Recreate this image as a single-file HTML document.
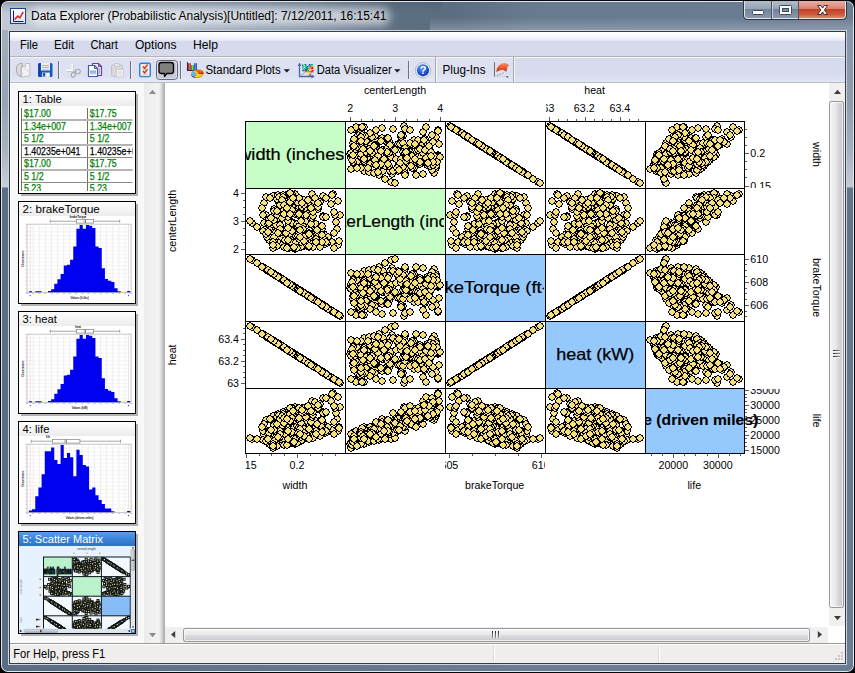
<!DOCTYPE html>
<html><head><meta charset="utf-8"><title>Data Explorer</title>
<style>
html,body{margin:0;padding:0;background:#000;overflow:hidden}
svg{display:block;font-family:"Liberation Sans",sans-serif}
text{white-space:pre}
</style></head><body>
<svg width="855" height="673" viewBox="0 0 855 673">
<defs>
<linearGradient id="g1" x1="0" y1="0" x2="1" y2="0"><stop offset="0" stop-color="#c2cad5"/><stop offset="0.2" stop-color="#b0bbc9"/><stop offset="0.34" stop-color="#8c9bae"/><stop offset="0.46" stop-color="#5d6f83"/><stop offset="0.53" stop-color="#5b6d81"/><stop offset="0.62" stop-color="#687a8f"/><stop offset="1" stop-color="#6b7d93"/></linearGradient>
<linearGradient id="g2" x1="0" y1="0" x2="0" y2="1"><stop offset="0" stop-color="#ffffff" stop-opacity="0.000"/><stop offset="0.55" stop-color="#ffffff" stop-opacity="0.000"/><stop offset="1" stop-color="#ffffff" stop-opacity="0.220"/></linearGradient>
<linearGradient id="g3" x1="0" y1="0" x2="0" y2="1"><stop offset="0" stop-color="#46566c" stop-opacity="0.400"/><stop offset="0.35" stop-color="#46566c" stop-opacity="0.188"/><stop offset="1" stop-color="#46566c" stop-opacity="0.000"/></linearGradient>
<clipPath id="wc0"><rect x="2" y="2" width="851" height="669" rx="6"/></clipPath>
<linearGradient id="g4" x1="0" y1="0" x2="0" y2="1"><stop offset="0" stop-color="#a4b0be"/><stop offset="0.11" stop-color="#96a3b3"/><stop offset="0.19" stop-color="#a8b3c1"/><stop offset="0.2476" stop-color="#c8d0d9"/><stop offset="0.2492" stop-color="#5c6e84"/><stop offset="1" stop-color="#5a6c82"/></linearGradient>
<clipPath id="wc"><rect x="2" y="2" width="851" height="669" rx="6"/></clipPath>
<linearGradient id="g5" x1="0" y1="0" x2="1" y2="0"><stop offset="0" stop-color="#5a6c82"/><stop offset="0.25" stop-color="#62748a"/><stop offset="0.6" stop-color="#6b7d93"/><stop offset="1" stop-color="#6b7d93"/></linearGradient>
<linearGradient id="g6" x1="0" y1="0" x2="0" y2="1"><stop offset="0" stop-color="#8797aa"/><stop offset="0.11" stop-color="#8e9bab"/><stop offset="0.19" stop-color="#a5b0be"/><stop offset="0.2476" stop-color="#c3cbd5"/><stop offset="0.2492" stop-color="#63758b"/><stop offset="1" stop-color="#6b7d93"/></linearGradient>
<filter id="blur" x="-20%" y="-100%" width="140%" height="300%"><feGaussianBlur stdDeviation="4"/></filter>
<linearGradient id="g7" x1="0" y1="0" x2="0" y2="1"><stop offset="0" stop-color="#ffffff"/><stop offset="1" stop-color="#d8e4f5"/></linearGradient>
<linearGradient id="g8" x1="0" y1="0" x2="0" y2="1"><stop offset="0" stop-color="#b3bdc9"/><stop offset="0.45" stop-color="#97a4b4"/><stop offset="0.46" stop-color="#70819a"/><stop offset="1" stop-color="#8a99ac"/></linearGradient>
<linearGradient id="g9" x1="0" y1="0" x2="0" y2="1"><stop offset="0" stop-color="#e9b0a4"/><stop offset="0.45" stop-color="#d9836f"/><stop offset="0.46" stop-color="#c23c22"/><stop offset="0.8" stop-color="#cf5a3e"/><stop offset="1" stop-color="#e08a6c"/></linearGradient>
<linearGradient id="g10" x1="0" y1="0" x2="0" y2="1"><stop offset="0" stop-color="#ffffff"/><stop offset="0.5" stop-color="#f7f8fc"/><stop offset="1" stop-color="#e3e7f3"/></linearGradient>
<linearGradient id="g11" x1="0" y1="0" x2="0" y2="1"><stop offset="0" stop-color="#d7dbee"/><stop offset="0.7" stop-color="#d8dcee"/><stop offset="1" stop-color="#e2e5f3"/></linearGradient>
<linearGradient id="g12" x1="0" y1="0" x2="0" y2="1"><stop offset="0" stop-color="#dde1f1"/><stop offset="0.7" stop-color="#dce0f0"/><stop offset="1" stop-color="#e6e9f5"/></linearGradient>
<linearGradient id="g13" x1="0" y1="0" x2="0" y2="1"><stop offset="0" stop-color="#8fa5d6"/><stop offset="1" stop-color="#c4d0ec"/></linearGradient>
<linearGradient id="g14" x1="0" y1="0" x2="1" y2="0"><stop offset="0" stop-color="#a01010"/><stop offset="0.5" stop-color="#ff5a48"/><stop offset="1" stop-color="#a01010"/></linearGradient>
<linearGradient id="g15" x1="0" y1="0" x2="1" y2="0"><stop offset="0" stop-color="#0c7a10"/><stop offset="0.5" stop-color="#58f050"/><stop offset="1" stop-color="#0c7a10"/></linearGradient>
<linearGradient id="g16" x1="0" y1="0" x2="1" y2="0"><stop offset="0" stop-color="#0c2a98"/><stop offset="0.5" stop-color="#4a90f0"/><stop offset="1" stop-color="#0c2a98"/></linearGradient>
<radialGradient id="hg" cx="0.4" cy="0.3" r="0.8"><stop offset="0" stop-color="#5f9cf5"/><stop offset="0.6" stop-color="#1c54d0"/><stop offset="1" stop-color="#0c2f9a"/></radialGradient>
<linearGradient id="g17" x1="0" y1="0" x2="0" y2="1"><stop offset="0" stop-color="#f49070"/><stop offset="0.5" stop-color="#e85a30"/><stop offset="1" stop-color="#cc3408"/></linearGradient>
<linearGradient id="g18" x1="0" y1="0" x2="1" y2="0"><stop offset="0" stop-color="#ebebeb"/><stop offset="0.5" stop-color="#f0f0f0"/><stop offset="1" stop-color="#f3f3f3"/></linearGradient>
<linearGradient id="g19" x1="0" y1="0" x2="1" y2="0"><stop offset="0" stop-color="#f2f2f2"/><stop offset="0.3" stop-color="#e0e0e0"/><stop offset="0.75" stop-color="#bdbdbd"/><stop offset="1" stop-color="#a6a6a6"/></linearGradient>
<linearGradient id="g20" x1="0" y1="0" x2="1" y2="0"><stop offset="0" stop-color="#f6f6f6"/><stop offset="0.45" stop-color="#e9e9eb"/><stop offset="0.55" stop-color="#dcdce0"/><stop offset="1" stop-color="#c4c4ca"/></linearGradient>
<linearGradient id="g21" x1="0" y1="0" x2="1" y2="0"><stop offset="0" stop-color="#2a2a2a"/><stop offset="1" stop-color="#9a9a9a"/></linearGradient>
<linearGradient id="g22" x1="0" y1="0" x2="0" y2="1"><stop offset="0" stop-color="#f6f6f6"/><stop offset="0.45" stop-color="#e9e9eb"/><stop offset="0.55" stop-color="#dcdce0"/><stop offset="1" stop-color="#c4c4ca"/></linearGradient>
<linearGradient id="g23" x1="0" y1="0" x2="0" y2="1"><stop offset="0" stop-color="#2a2a2a"/><stop offset="1" stop-color="#9a9a9a"/></linearGradient>
<linearGradient id="g24" x1="0" y1="0" x2="0" y2="1"><stop offset="0" stop-color="#ffffff"/><stop offset="1" stop-color="#ebebeb"/></linearGradient>
<linearGradient id="g25" x1="0" y1="0" x2="0" y2="1"><stop offset="0" stop-color="#5a9ee8"/><stop offset="0.5" stop-color="#3c84d8"/><stop offset="1" stop-color="#2f72c4"/></linearGradient>
<clipPath id="c1"><rect x="19" y="106" width="113.5" height="85"/></clipPath>
<marker id="m" markerWidth="8" markerHeight="8" refX="4" refY="4" markerUnits="userSpaceOnUse" overflow="visible"><path d="M3 0h2v1h2v2h1v2h-1v2h-2v1h-2v-1h-2v-2h-1v-2h1v-2h2z" fill="#000"/><path d="M3 1h2v1h1v1h1v2h-1v1h-1v1h-2v-1h-1v-1h-1v-2h1v-1h1z" fill="#f5de7c"/></marker>
<clipPath id="d0"><rect x="246" y="121" width="98" height="67"/></clipPath>
<clipPath id="d1"><rect x="346" y="188" width="98" height="66"/></clipPath>
<clipPath id="d2"><rect x="446" y="254" width="98" height="67"/></clipPath>
<clipPath id="d3"><rect x="546" y="321" width="98" height="67"/></clipPath>
<clipPath id="d4"><rect x="646" y="388" width="400" height="65"/></clipPath>
<clipPath id="t2"><rect x="346" y="83" width="99" height="38"/></clipPath>
<clipPath id="t4"><rect x="546" y="83" width="99" height="38"/></clipPath>
<clipPath id="b1"><rect x="246" y="454" width="99" height="30"/></clipPath>
<clipPath id="b3"><rect x="445" y="454" width="100" height="30"/></clipPath>
<clipPath id="b5"><rect x="646" y="454" width="110" height="30"/></clipPath>
<clipPath id="r1"><rect x="745" y="122" width="90" height="66"/></clipPath>
<clipPath id="r3"><rect x="745" y="255" width="90" height="66"/></clipPath>
<clipPath id="r5"><rect x="745" y="389" width="90" height="75"/></clipPath>
<clipPath id="c5"><rect x="19" y="546" width="112" height="82.5"/></clipPath>
<marker id="mm" markerWidth="3" markerHeight="3" refX="1.5" refY="1.5" markerUnits="userSpaceOnUse" overflow="visible"><rect x="0" y="0" width="3" height="3" fill="#0c141c"/><rect x="0.9" y="0.9" width="1.2" height="1.2" fill="#f5de7c"/></marker>
<linearGradient id="g26" x1="0" y1="0" x2="1" y2="0"><stop offset="0" stop-color="#f0f0f0"/><stop offset="1" stop-color="#a8a8b0"/></linearGradient>
<linearGradient id="g27" x1="0" y1="0" x2="0" y2="1"><stop offset="0" stop-color="#e8ecf2"/><stop offset="1" stop-color="#98a4b4"/></linearGradient>
</defs>
<rect x="0" y="0" width="855" height="673" rx="8" fill="#05070a"/>
<rect x="1" y="1" width="853" height="671" rx="7" fill="#e3e8ee"/>
<rect x="2" y="2" width="851" height="669" rx="6" fill="#6b7d93"/>
<rect x="2" y="2" width="851" height="40" rx="6" fill="url(#g1)"/>
<rect x="430" y="2" width="423" height="28" fill="url(#g2)"/>
<rect x="2" y="2" width="440" height="12" fill="url(#g3)" clip-path="url(#wc0)"/>
<g clip-path="url(#wc)">
<rect x="2" y="30" width="7" height="634" fill="url(#g4)" />
<rect x="2" y="664" width="851" height="7" fill="url(#g5)" />
<rect x="847" y="30" width="6" height="634" fill="url(#g6)" />
</g>
<rect x="8" y="30" width="839" height="635" fill="#cdd4dd" />
<rect x="9" y="31" width="837" height="633" fill="#333c48" />
<rect x="10" y="32" width="835" height="631" fill="#ffffff" />
<rect x="30" y="8" width="360" height="17" rx="8" fill="#ffffff" opacity="0.6" filter="url(#blur)"/>
<rect x="10" y="8" width="16" height="16" fill="#1b3fa0" />
<rect x="11" y="9" width="14" height="14" fill="url(#g7)" />
<path d="M13.5 10.5V21.5H23.5" stroke="#1a1a50" stroke-width="1" fill="none"/>
<path d="M14.8 19.4l3-3.2 2.1 1.700 3.300-6" stroke="#d03020" stroke-width="1.6" fill="none"/>
<text x="31.00" y="20.00" font-size="12" textLength="355.50" lengthAdjust="spacingAndGlyphs" fill="#000" >Data Explorer (Probabilistic Analysis)[Untitled]: 7/12/2011, 16:15:41</text>
<path d="M743 1H847V15Q847 20 842 20H748Q743 20 743 15Z" fill="#2e3744"/>
<path d="M744 1H846V15Q846 19 842 19H748Q744 19 744 15Z" fill="#dfe5ec"/>
<path d="M745 1H771V18H748Q745 18 745 15Z" fill="url(#g8)"/>
<rect x="771" y="1" width="1" height="18" fill="#4a5665" />
<rect x="772" y="1" width="1" height="18" fill="#c5ccd6" />
<rect x="773" y="1" width="25" height="17" fill="url(#g8)" />
<rect x="798" y="1" width="1" height="18" fill="#4a5665" />
<path d="M799 1H845V15Q845 18 842 18H799Z" fill="url(#g9)"/>
<rect x="752.5" y="10.5" width="11" height="4" rx="1" fill="#fff" stroke="#3f4a58" stroke-width="1"/>
<rect x="779.5" y="5.5" width="12" height="9" rx="1" fill="#fff" stroke="#3f4a58" stroke-width="1"/>
<rect x="782.5" y="8.5" width="6" height="3" fill="#7e8ea2" stroke="#3f4a58" stroke-width="1"/>
<path d="M817.5 5.5h3.4l1.7 2.6 1.7-2.6h3.4l-3.3 4.5 3.3 4.5h-3.4l-1.7-2.6-1.7 2.6h-3.4l3.3-4.5z" fill="#fff" stroke="#4a2a28" stroke-width="1" stroke-linejoin="round"/>
<rect x="10" y="32" width="835" height="9" fill="url(#g10)" />
<rect x="10" y="41" width="835" height="15" fill="#d6daec" />
<rect x="10" y="56" width="835" height="1" fill="#b4b2b4" />
<rect x="10" y="57" width="835" height="1" fill="#f4f5fa" />
<rect x="10" y="58" width="835" height="24" fill="url(#g11)" />
<rect x="10" y="82" width="835" height="1" fill="#b9bcc8" />
<text x="20.00" y="49.00" font-size="12.5" textLength="18.00" lengthAdjust="spacingAndGlyphs" fill="#000" >File</text>
<text x="54.00" y="49.00" font-size="12.5" textLength="20.00" lengthAdjust="spacingAndGlyphs" fill="#000" >Edit</text>
<text x="90.50" y="49.00" font-size="12.5" textLength="27.50" lengthAdjust="spacingAndGlyphs" fill="#000" >Chart</text>
<text x="135.00" y="49.00" font-size="12.5" textLength="41.50" lengthAdjust="spacingAndGlyphs" fill="#000" >Options</text>
<text x="193.00" y="49.00" font-size="12.5" textLength="25.00" lengthAdjust="spacingAndGlyphs" fill="#000" >Help</text>
<rect x="10" y="58" width="425" height="24" fill="url(#g12)" />
<rect x="435" y="57" width="1" height="25" fill="#a8a8ae" />
<rect x="436" y="57" width="1" height="25" fill="#f6f7fb" />
<rect x="437" y="58" width="76" height="24" fill="url(#g12)" />
<rect x="513" y="57" width="1" height="25" fill="#a8a8ae" />
<rect x="514" y="57" width="1" height="25" fill="#f0f2f9" />
<path d="M21 66.5h4.5v-3h4.3v12.2l-9 1.6z" fill="#f3f3f4" stroke="#bcbcc2" stroke-width="0.9" stroke-linejoin="round"/>
<path d="M16.6 66.2l3.2-2.8h2.4v3.4h-1v10l-3.2-1.6-1.4-4z" fill="#dcdcdf" stroke="#a2a2a8" stroke-width="0.9" stroke-linejoin="round"/>
<path d="M18 68.5q1.5 2.5 3 1.5M23.5 69h3q1.5 0.5 1.2 3M21.5 72.5l3 2.5" fill="none" stroke="#d0d0d6" stroke-width="0.8"/>
<rect x="38" y="63" width="14.5" height="14" rx="1.5" fill="#1958c4"/>
<rect x="38.5" y="63.5" width="2" height="13" fill="#0c3fa8"/>
<rect x="41" y="63" width="9" height="7.5" fill="#f4f1ea" />
<rect x="42" y="65" width="7" height="1" fill="#b0b0b0" />
<rect x="42" y="67" width="7" height="1" fill="#b0b0b0" />
<rect x="42" y="69" width="7" height="0.8" fill="#c8c8c8" />
<rect x="42" y="72.5" width="8" height="4.5" fill="#c9ccd4" />
<rect x="43" y="73" width="2" height="3.5" fill="#1958c4" />
<rect x="46.5" y="73" width="2.5" height="3.5" fill="#ffffff" />
<rect x="58" y="61" width="1" height="18" fill="#6f6f80" />
<rect x="59" y="61" width="1" height="18" fill="#eceef7" />
<rect x="71.4" y="64.3" width="2.2" height="7" fill="#f7f7f8" />
<rect x="73.3" y="64.8" width="0.8" height="6.4" fill="#c2c2c8" />
<rect x="66" y="69.3" width="6.6" height="2.1" fill="#f7f7f8" />
<rect x="66.2" y="71.2" width="6.4" height="0.8" fill="#c2c2c8" />
<ellipse cx="73.3" cy="74.8" rx="1.9" ry="2.4" fill="#e4e6f0" stroke="#a4a4ac" stroke-width="1.1" transform="rotate(12 73.3 74.8)"/>
<ellipse cx="77.9" cy="71.5" rx="2.4" ry="2.1" fill="#e4e6f0" stroke="#a4a4ac" stroke-width="1.1" transform="rotate(-20 77.9 71.5)"/>
<path d="M73 71.2l1.2 1.2M74.2 71.5l1.6-0.4" stroke="#b0b0b8" stroke-width="1" fill="none"/>
<path d="M92.5 63.5h6l3 3v9h-9z" fill="#efeaf7" stroke="#6b3fa3" stroke-width="1.2" stroke-linejoin="round"/>
<path d="M98.5 63.5v3h3" fill="none" stroke="#6b3fa3" stroke-width="1"/>
<rect x="98.5" y="68" width="1.5" height="6" fill="#b9a4d8" />
<path d="M88.5 65.5h6l3 3v8h-9z" fill="#ffffff" stroke="#3f5ea6" stroke-width="1.2" stroke-linejoin="round"/>
<path d="M94.5 65.5v3h3" fill="none" stroke="#3f5ea6" stroke-width="1"/>
<rect x="90" y="70.5" width="6" height="4" fill="url(#g13)" />
<rect x="111.5" y="65" width="11" height="11.5" rx="1" fill="#d9d9dd" stroke="#c2c2c8" stroke-width="1"/>
<rect x="114.5" y="63.5" width="5" height="3" rx="1" fill="#e6e6ea" stroke="#bcbcc4" stroke-width="0.8"/>
<rect x="116.5" y="69.5" width="7" height="7.5" fill="#f6f6f8" stroke="#c6c6cc" stroke-width="0.8"/>
<path d="M117.5 72h5M117.5 74h5M119 70.5v6M121 70.5v6" stroke="#d6d6dc" stroke-width="0.7" fill="none"/>
<rect x="130" y="61" width="1" height="18" fill="#6f6f80" />
<rect x="131" y="61" width="1" height="18" fill="#eceef7" />
<rect x="139.7" y="63.2" width="10.6" height="13.4" rx="1.5" fill="#f3ede2" stroke="#2b7fe3" stroke-width="1.4"/>
<path d="M143 66.5l1.6 2 3-4M143 71l1.6 2 3-4" fill="none" stroke="#d02a1c" stroke-width="1.3"/>
<path d="M142.5 69.5h5M142.5 74.3h5" stroke="#b9b4aa" stroke-width="0.8"/>
<rect x="156.5" y="60.5" width="21" height="19" rx="3" fill="#c6cad8" stroke="#676a78" stroke-width="1"/>
<rect x="157.5" y="61.5" width="19" height="17" rx="2.2" fill="none" stroke="#d9dce8" stroke-width="1"/>
<path d="M161.5 62.5h9.5q2.5 0 2.5 2.5v6q0 2.5-2.5 2.5h-4.2l-2.3 3v-3h-3q-2.5 0-2.5-2.5v-6q0-2.5 2.5-2.5z" fill="#808080" stroke="#000" stroke-width="1.3" stroke-linejoin="round"/>
<rect x="180" y="61" width="1" height="18" fill="#6f6f80" />
<rect x="181" y="61" width="1" height="18" fill="#eceef7" />
<path d="M187.5 62.2v8.3h9.6" fill="none" stroke="#1c2474" stroke-width="1.1"/>
<rect x="188.1" y="63.2" width="2.7" height="6.9" fill="url(#g14)" />
<rect x="191.1" y="65.1" width="2.7" height="5" fill="url(#g15)" />
<rect x="194.2" y="63.2" width="2.7" height="6.9" fill="url(#g16)" />
<ellipse cx="197" cy="74.4" rx="5.8" ry="3.7" fill="#c88a10"/>
<ellipse cx="197" cy="73.6" rx="5.8" ry="3.7" fill="#f8d010"/>
<path d="M197 73.6L195.2 77.1A5.8 3.7 0 0 1 193 70.9z" fill="#68b0ee"/>
<path d="M191.2 73.6A5.8 3.7 0 0 0 195.2 77.1L195.2 77.9A5.8 3.7 0 0 1 191.2 74.4z" fill="#2c5a98"/>
<path d="M198 72.6L194.6 70.2A5.8 3.6 0 0 1 203.8 72.6z" fill="#ff5a10"/>
<path d="M198 72.6H203.8A5.8 3.6 0 0 1 203.2 74.2L198 73.4z" fill="#c01808"/>
<text x="205.40" y="74.00" font-size="12.5" textLength="75.40" lengthAdjust="spacingAndGlyphs" fill="#000" >Standard Plots</text>
<path d="M283.6 69.2h6.4l-3.2 3.4z" fill="#1a1a1a"/>
<path d="M299.5 64v12.5h13.5" fill="none" stroke="#4a68b0" stroke-width="1.3"/>
<path d="M297.6 66l1.9-3.6 1.9 3.6zM311.4 74.6l3.4 1.9-3.4 1.9z" fill="#4a68b0"/>
<path d="M300.5 75.5l5-3.5" stroke="#9aa8cc" stroke-width="1"/>
<rect x="304" y="68" width="1.3" height="1.3" fill="#20c040" />
<rect x="311" y="67" width="1.3" height="1.3" fill="#f0e020" />
<rect x="308" y="71" width="1.3" height="1.3" fill="#20c040" />
<rect x="305" y="65" width="1.3" height="1.3" fill="#1060d0" />
<rect x="307" y="68" width="1.3" height="1.3" fill="#1060d0" />
<rect x="308" y="65" width="1.3" height="1.3" fill="#20b0e0" />
<rect x="311" y="68" width="1.3" height="1.3" fill="#f0e020" />
<rect x="309" y="64" width="1.3" height="1.3" fill="#30d060" />
<rect x="302" y="70" width="1.3" height="1.3" fill="#20c040" />
<rect x="307" y="69" width="1.3" height="1.3" fill="#20c040" />
<rect x="309" y="71" width="1.3" height="1.3" fill="#20c040" />
<rect x="309" y="68" width="1.3" height="1.3" fill="#e02020" />
<rect x="311" y="64" width="1.3" height="1.3" fill="#20b0e0" />
<rect x="307" y="66" width="1.3" height="1.3" fill="#1060d0" />
<rect x="310" y="70" width="1.3" height="1.3" fill="#20c040" />
<rect x="307" y="67" width="1.3" height="1.3" fill="#20c040" />
<rect x="307" y="67" width="1.3" height="1.3" fill="#20b0e0" />
<rect x="311" y="69" width="1.3" height="1.3" fill="#f0e020" />
<rect x="311" y="71" width="1.3" height="1.3" fill="#e02020" />
<rect x="309" y="66" width="1.3" height="1.3" fill="#30d060" />
<rect x="311" y="68" width="1.3" height="1.3" fill="#e02020" />
<rect x="308" y="71" width="1.3" height="1.3" fill="#f08020" />
<rect x="305" y="64" width="1.3" height="1.3" fill="#1060d0" />
<rect x="303" y="70" width="1.3" height="1.3" fill="#1060d0" />
<rect x="311" y="64" width="1.3" height="1.3" fill="#1060d0" />
<rect x="310" y="70" width="1.3" height="1.3" fill="#f0e020" />
<rect x="308" y="70" width="1.3" height="1.3" fill="#20c040" />
<rect x="309" y="66" width="1.3" height="1.3" fill="#20c040" />
<rect x="307" y="71" width="1.3" height="1.3" fill="#f08020" />
<rect x="302" y="64" width="1.3" height="1.3" fill="#30d060" />
<rect x="302" y="65" width="1.3" height="1.3" fill="#1060d0" />
<rect x="305" y="66" width="1.3" height="1.3" fill="#2030e0" />
<rect x="312" y="66" width="1.3" height="1.3" fill="#f08020" />
<rect x="312" y="71" width="1.3" height="1.3" fill="#20c040" />
<rect x="306" y="70" width="1.3" height="1.3" fill="#20c040" />
<rect x="308" y="68" width="1.3" height="1.3" fill="#f0e020" />
<rect x="308" y="71" width="1.3" height="1.3" fill="#f08020" />
<rect x="306" y="69" width="1.3" height="1.3" fill="#e02020" />
<rect x="311" y="67" width="1.3" height="1.3" fill="#f08020" />
<rect x="307" y="68" width="1.3" height="1.3" fill="#2030e0" />
<rect x="310" y="71" width="1.3" height="1.3" fill="#f08020" />
<rect x="302" y="68" width="1.3" height="1.3" fill="#20b0e0" />
<rect x="303" y="69" width="1.3" height="1.3" fill="#1060d0" />
<rect x="306" y="71" width="1.3" height="1.3" fill="#f08020" />
<rect x="309" y="64" width="1.3" height="1.3" fill="#2030e0" />
<rect x="312" y="64" width="1.3" height="1.3" fill="#20c040" />
<rect x="305" y="67" width="1.3" height="1.3" fill="#30d060" />
<rect x="308" y="65" width="1.3" height="1.3" fill="#20b0e0" />
<rect x="305" y="66" width="1.3" height="1.3" fill="#30d060" />
<rect x="305" y="70" width="1.3" height="1.3" fill="#2030e0" />
<rect x="310" y="64" width="1.3" height="1.3" fill="#30d060" />
<rect x="309" y="65" width="1.3" height="1.3" fill="#30d060" />
<rect x="304" y="70" width="1.3" height="1.3" fill="#20b0e0" />
<rect x="305" y="69" width="1.3" height="1.3" fill="#2030e0" />
<rect x="303" y="66" width="1.3" height="1.3" fill="#20c040" />
<rect x="309" y="65" width="1.3" height="1.3" fill="#20b0e0" />
<rect x="303" y="69" width="1.3" height="1.3" fill="#20b0e0" />
<rect x="311" y="67" width="1.3" height="1.3" fill="#e02020" />
<rect x="310" y="64" width="1.3" height="1.3" fill="#20b0e0" />
<rect x="305" y="70" width="1.3" height="1.3" fill="#e02020" />
<rect x="311" y="66" width="1.3" height="1.3" fill="#f0e020" />
<rect x="310" y="66" width="1.3" height="1.3" fill="#e02020" />
<rect x="306" y="68" width="1.3" height="1.3" fill="#20c040" />
<rect x="307" y="69" width="1.3" height="1.3" fill="#20c040" />
<rect x="306" y="67" width="1.3" height="1.3" fill="#1060d0" />
<rect x="304" y="64" width="1.3" height="1.3" fill="#30d060" />
<rect x="312" y="67" width="1.3" height="1.3" fill="#e02020" />
<rect x="302" y="67" width="1.3" height="1.3" fill="#30d060" />
<rect x="312" y="68" width="1.3" height="1.3" fill="#e02020" />
<rect x="311" y="70" width="1.3" height="1.3" fill="#f08020" />
<rect x="308" y="72" width="1.4" height="1.4" fill="#f0e020" />
<rect x="309.5" y="73.5" width="1.4" height="1.4" fill="#e02020" />
<rect x="311" y="71" width="1.4" height="1.4" fill="#e02020" />
<rect x="307" y="74" width="1.4" height="1.4" fill="#f0e020" />
<rect x="310" y="69.5" width="1.4" height="1.4" fill="#f0e020" />
<rect x="312" y="70" width="1.4" height="1.4" fill="#e02020" />
<rect x="309" y="75" width="1.4" height="1.4" fill="#e02020" />
<text x="316.70" y="74.00" font-size="12.5" textLength="75.00" lengthAdjust="spacingAndGlyphs" fill="#000" >Data Visualizer</text>
<path d="M394.1 69.2h6.4l-3.2 3.4z" fill="#1a1a1a"/>
<rect x="408" y="61" width="1" height="18" fill="#6f6f80" />
<rect x="409" y="61" width="1" height="18" fill="#eceef7" />
<circle cx="423" cy="70.3" r="7.6" fill="#f4f6fb" stroke="#9aa6c4" stroke-width="0.8"/>
<circle cx="423" cy="70.3" r="6.1" fill="url(#hg)"/>
<text x="423.00" y="74.30" font-size="11" text-anchor="middle" font-weight="bold" fill="#ffffff" >?</text>
<text x="442.50" y="74.00" font-size="12.5" textLength="43.00" lengthAdjust="spacingAndGlyphs" fill="#000" >Plug-Ins</text>
<path d="M494.4 62.3v14.3h13" fill="none" stroke="#d2d4dc" stroke-width="1"/>
<rect x="494" y="62.3" width="1" height="14.3" fill="#6e6e74" />
<path d="M496.2 71.8q0.3-4.5 2.8-6.6 2.6-2.4 6-2.2 2.6 0.4 4 2.6l-1.600 1.2-0.800 4.800q-1.400-0.300-2.300-1.200-2.300-1.200-4.600 0.200-1.600 1.100-3.500 1.200z" fill="url(#g17)"/>
<path d="M497 75.6l7-2.800" stroke="#8a8a90" stroke-width="0.9" stroke-dasharray="1.6 1.2"/>
<rect x="506.6" y="76" width="1.6" height="1.6" fill="#55555c" />
<rect x="10" y="83" width="134" height="560" fill="#f8f8f8" />
<rect x="10" y="83" width="134" height="1" fill="#ffffff" />
<rect x="10" y="83" width="1" height="560" fill="#ffffff" />
<rect x="144" y="83" width="15" height="560" fill="url(#g18)" />
<rect x="159" y="83" width="6" height="560" fill="url(#g19)" />
<path d="M149 94l3.5-4.2 3.5 4.2z" fill="#8a8a8a"/>
<path d="M149 633l3.5 4.2 3.5-4.2z" fill="#8a8a8a"/>
<rect x="165" y="83" width="664" height="544" fill="#ffffff" />
<rect x="829" y="83" width="16" height="543" fill="#f0f0f0" />
<path d="M834 94l3.5-4.2 3.5 4.2z" fill="#3c3c3c"/>
<path d="M834 616l3.5 4.2 3.5-4.2z" fill="#3c3c3c"/>
<rect x="829.5" y="101.5" width="14" height="506" rx="1.8" fill="url(#g20)" stroke="#979797" stroke-width="1"/>
<rect x="830.5" y="102.5" width="12" height="504" rx="1.5" fill="none" stroke="#ffffff" stroke-opacity="0.7" stroke-width="1"/>
<rect x="833" y="350" width="7" height="1" fill="url(#g21)" />
<rect x="833" y="351" width="7" height="1" fill="#f4f4f4" />
<rect x="833" y="353" width="7" height="1" fill="url(#g21)" />
<rect x="833" y="354" width="7" height="1" fill="#f4f4f4" />
<rect x="833" y="356" width="7" height="1" fill="url(#g21)" />
<rect x="833" y="357" width="7" height="1" fill="#f4f4f4" />
<rect x="165" y="627" width="663" height="16" fill="#f0f0f0" />
<rect x="828" y="627" width="17" height="16" fill="#ffffff" />
<path d="M175.2 631l-4.2 3.5 4.2 3.5z" fill="#3c3c3c"/>
<path d="M817.8 631l4.2 3.5-4.2 3.5z" fill="#3c3c3c"/>
<rect x="183.5" y="628.5" width="626" height="13" rx="1.8" fill="url(#g22)" stroke="#979797" stroke-width="1"/>
<rect x="184.5" y="629.5" width="624" height="11" rx="1.5" fill="none" stroke="#ffffff" stroke-opacity="0.7" stroke-width="1"/>
<rect x="492" y="631" width="1" height="7" fill="url(#g23)" />
<rect x="493" y="631" width="1" height="7" fill="#f4f4f4" />
<rect x="495" y="631" width="1" height="7" fill="url(#g23)" />
<rect x="496" y="631" width="1" height="7" fill="#f4f4f4" />
<rect x="498" y="631" width="1" height="7" fill="url(#g23)" />
<rect x="499" y="631" width="1" height="7" fill="#f4f4f4" />
<rect x="10" y="643" width="835" height="1" fill="#9a9a9a" />
<rect x="10" y="644" width="835" height="19" fill="#f0eded" />
<rect x="10" y="644" width="835" height="1" fill="#ffffff" />
<rect x="493" y="646" width="1" height="16" fill="#dcd9d9" />
<rect x="494" y="646" width="1" height="16" fill="#ffffff" />
<rect x="658" y="646" width="1" height="16" fill="#dcd9d9" />
<rect x="659" y="646" width="1" height="16" fill="#ffffff" />
<text x="13.30" y="658.00" font-size="12.5" textLength="92.00" lengthAdjust="spacingAndGlyphs" fill="#000" >For Help, press F1</text>
<rect x="841" y="658" width="2" height="2" fill="#b8b4b4" />
<rect x="841.5" y="658.5" width="1" height="1" fill="#ffffff" />
<rect x="838" y="658" width="2" height="2" fill="#b8b4b4" />
<rect x="838.5" y="658.5" width="1" height="1" fill="#ffffff" />
<rect x="835" y="658" width="2" height="2" fill="#b8b4b4" />
<rect x="835.5" y="658.5" width="1" height="1" fill="#ffffff" />
<rect x="841" y="655" width="2" height="2" fill="#b8b4b4" />
<rect x="841.5" y="655.5" width="1" height="1" fill="#ffffff" />
<rect x="838" y="655" width="2" height="2" fill="#b8b4b4" />
<rect x="838.5" y="655.5" width="1" height="1" fill="#ffffff" />
<rect x="841" y="652" width="2" height="2" fill="#b8b4b4" />
<rect x="841.5" y="652.5" width="1" height="1" fill="#ffffff" />
<rect x="136" y="94" width="2" height="102" fill="#b2b2b2" />
<rect x="21" y="194" width="117" height="2" fill="#b2b2b2" />
<rect x="18" y="91" width="118" height="103" fill="#000000" />
<rect x="19" y="92" width="116" height="101" fill="#ffffff" />
<rect x="19" y="92" width="116" height="14" fill="url(#g24)" />
<text x="22.60" y="103.20" font-size="11.4" textLength="39.30" lengthAdjust="spacingAndGlyphs" fill="#000000" >1: Table</text>
<g clip-path="url(#c1)">
<rect x="21" y="108" width="1" height="84" fill="#707070" />
<rect x="87" y="108" width="1" height="84" fill="#707070" />
<rect x="22" y="119" width="111" height="2" fill="#b4b4b4" />
<rect x="22" y="144" width="111" height="2" fill="#b4b4b4" />
<rect x="22" y="169" width="111" height="2" fill="#b4b4b4" />
<rect x="22" y="132" width="111" height="1" fill="#8c8c8c" />
<rect x="22" y="157" width="111" height="1" fill="#8c8c8c" />
<rect x="22" y="182" width="111" height="1" fill="#8c8c8c" />
<text x="24.00" y="117.30" font-size="11" textLength="26.91" lengthAdjust="spacingAndGlyphs" fill="#008000" stroke="#008000" stroke-width="0.25">$17.00</text>
<text x="89.80" y="117.30" font-size="11" textLength="26.91" lengthAdjust="spacingAndGlyphs" fill="#008000" stroke="#008000" stroke-width="0.25">$17.75</text>
<text x="24.00" y="129.80" font-size="11" textLength="41.84" lengthAdjust="spacingAndGlyphs" fill="#008000" stroke="#008000" stroke-width="0.25">1.34e+007</text>
<text x="89.80" y="129.80" font-size="11" textLength="41.84" lengthAdjust="spacingAndGlyphs" fill="#008000" stroke="#008000" stroke-width="0.25">1.34e+007</text>
<text x="24.00" y="142.30" font-size="11" textLength="19.57" lengthAdjust="spacingAndGlyphs" fill="#008000" stroke="#008000" stroke-width="0.25">5 1/2</text>
<text x="89.80" y="142.30" font-size="11" textLength="19.57" lengthAdjust="spacingAndGlyphs" fill="#008000" stroke="#008000" stroke-width="0.25">5 1/2</text>
<text x="24.00" y="154.80" font-size="11" textLength="56.52" lengthAdjust="spacingAndGlyphs" fill="#000000" stroke="#000000" stroke-width="0.25">1.40235e+041</text>
<text x="89.80" y="154.80" font-size="11" textLength="56.52" lengthAdjust="spacingAndGlyphs" fill="#000000" stroke="#000000" stroke-width="0.25">1.40235e+041</text>
<text x="24.00" y="167.30" font-size="11" textLength="26.91" lengthAdjust="spacingAndGlyphs" fill="#008000" stroke="#008000" stroke-width="0.25">$17.00</text>
<text x="89.80" y="167.30" font-size="11" textLength="26.91" lengthAdjust="spacingAndGlyphs" fill="#008000" stroke="#008000" stroke-width="0.25">$17.75</text>
<text x="24.00" y="179.80" font-size="11" textLength="19.57" lengthAdjust="spacingAndGlyphs" fill="#008000" stroke="#008000" stroke-width="0.25">5 1/2</text>
<text x="89.80" y="179.80" font-size="11" textLength="19.57" lengthAdjust="spacingAndGlyphs" fill="#008000" stroke="#008000" stroke-width="0.25">5 1/2</text>
<text x="24.00" y="192.30" font-size="11" textLength="17.13" lengthAdjust="spacingAndGlyphs" fill="#008000" stroke="#008000" stroke-width="0.25">5.23</text>
<text x="89.80" y="192.30" font-size="11" textLength="17.13" lengthAdjust="spacingAndGlyphs" fill="#008000" stroke="#008000" stroke-width="0.25">5.23</text>
</g>
<rect x="136" y="204" width="2" height="102" fill="#b2b2b2" />
<rect x="21" y="304" width="117" height="2" fill="#b2b2b2" />
<rect x="18" y="201" width="118" height="103" fill="#000000" />
<rect x="19" y="202" width="116" height="101" fill="#ffffff" />
<rect x="19" y="202" width="116" height="14" fill="url(#g24)" />
<text x="22.60" y="213.20" font-size="11.4" textLength="77.20" lengthAdjust="spacingAndGlyphs" fill="#000000" >2: brakeTorque</text>
<rect x="27.05" y="224.18" width="104.06" height="68.17" fill="#ffffff" stroke="#b8b8b8" stroke-width="0.8"/>
<line x1="33.1693" y1="224.337" x2="33.1693" y2="292.356" stroke="#e4e4e4" stroke-width="0.6" />
<line x1="39.2903" y1="224.337" x2="39.2903" y2="292.356" stroke="#e4e4e4" stroke-width="0.6" />
<line x1="45.4112" y1="224.337" x2="45.4112" y2="292.356" stroke="#e4e4e4" stroke-width="0.6" />
<line x1="51.5322" y1="224.337" x2="51.5322" y2="292.356" stroke="#e4e4e4" stroke-width="0.6" />
<line x1="57.6531" y1="224.337" x2="57.6531" y2="292.356" stroke="#e4e4e4" stroke-width="0.6" />
<line x1="63.7741" y1="224.337" x2="63.7741" y2="292.356" stroke="#e4e4e4" stroke-width="0.6" />
<line x1="69.895" y1="224.337" x2="69.895" y2="292.356" stroke="#e4e4e4" stroke-width="0.6" />
<line x1="76.016" y1="224.337" x2="76.016" y2="292.356" stroke="#e4e4e4" stroke-width="0.6" />
<line x1="82.1369" y1="224.337" x2="82.1369" y2="292.356" stroke="#e4e4e4" stroke-width="0.6" />
<line x1="88.2579" y1="224.337" x2="88.2579" y2="292.356" stroke="#e4e4e4" stroke-width="0.6" />
<line x1="94.3788" y1="224.337" x2="94.3788" y2="292.356" stroke="#e4e4e4" stroke-width="0.6" />
<line x1="100.5" y1="224.337" x2="100.5" y2="292.356" stroke="#e4e4e4" stroke-width="0.6" />
<line x1="106.621" y1="224.337" x2="106.621" y2="292.356" stroke="#e4e4e4" stroke-width="0.6" />
<line x1="112.742" y1="224.337" x2="112.742" y2="292.356" stroke="#e4e4e4" stroke-width="0.6" />
<line x1="118.863" y1="224.337" x2="118.863" y2="292.356" stroke="#e4e4e4" stroke-width="0.6" />
<line x1="124.984" y1="224.337" x2="124.984" y2="292.356" stroke="#e4e4e4" stroke-width="0.6" />
<line x1="27.0484" y1="227.968" x2="131.105" y2="227.968" stroke="#ececec" stroke-width="0.6" />
<line x1="27.0484" y1="231.756" x2="131.105" y2="231.756" stroke="#ececec" stroke-width="0.6" />
<line x1="27.0484" y1="235.543" x2="131.105" y2="235.543" stroke="#ececec" stroke-width="0.6" />
<line x1="27.0484" y1="239.331" x2="131.105" y2="239.331" stroke="#ececec" stroke-width="0.6" />
<line x1="27.0484" y1="243.118" x2="131.105" y2="243.118" stroke="#ececec" stroke-width="0.6" />
<line x1="27.0484" y1="246.906" x2="131.105" y2="246.906" stroke="#ececec" stroke-width="0.6" />
<line x1="27.0484" y1="250.693" x2="131.105" y2="250.693" stroke="#ececec" stroke-width="0.6" />
<line x1="27.0484" y1="254.481" x2="131.105" y2="254.481" stroke="#ececec" stroke-width="0.6" />
<line x1="27.0484" y1="258.268" x2="131.105" y2="258.268" stroke="#ececec" stroke-width="0.6" />
<line x1="27.0484" y1="262.056" x2="131.105" y2="262.056" stroke="#ececec" stroke-width="0.6" />
<line x1="27.0484" y1="265.843" x2="131.105" y2="265.843" stroke="#ececec" stroke-width="0.6" />
<line x1="27.0484" y1="269.631" x2="131.105" y2="269.631" stroke="#ececec" stroke-width="0.6" />
<line x1="27.0484" y1="273.418" x2="131.105" y2="273.418" stroke="#ececec" stroke-width="0.6" />
<line x1="27.0484" y1="277.206" x2="131.105" y2="277.206" stroke="#ececec" stroke-width="0.6" />
<line x1="27.0484" y1="280.993" x2="131.105" y2="280.993" stroke="#ececec" stroke-width="0.6" />
<line x1="27.0484" y1="284.781" x2="131.105" y2="284.781" stroke="#ececec" stroke-width="0.6" />
<line x1="27.0484" y1="288.568" x2="131.105" y2="288.568" stroke="#ececec" stroke-width="0.6" />
<line x1="30.1685" y1="224.337" x2="30.1685" y2="292.356" stroke="#e8a0a0" stroke-width="0.6" stroke-dasharray="1 1"/>
<line x1="128.452" y1="224.337" x2="128.452" y2="292.356" stroke="#e8a0a0" stroke-width="0.6" stroke-dasharray="1 1"/>
<line x1="25.4883" y1="224.181" x2="26.8924" y2="224.181" stroke="#9a9a9a" stroke-width="0.5" />
<line x1="25.4883" y1="227.968" x2="26.8924" y2="227.968" stroke="#9a9a9a" stroke-width="0.5" />
<line x1="25.4883" y1="231.756" x2="26.8924" y2="231.756" stroke="#9a9a9a" stroke-width="0.5" />
<line x1="25.4883" y1="235.543" x2="26.8924" y2="235.543" stroke="#9a9a9a" stroke-width="0.5" />
<line x1="25.4883" y1="239.331" x2="26.8924" y2="239.331" stroke="#9a9a9a" stroke-width="0.5" />
<line x1="25.4883" y1="243.118" x2="26.8924" y2="243.118" stroke="#9a9a9a" stroke-width="0.5" />
<line x1="25.4883" y1="246.906" x2="26.8924" y2="246.906" stroke="#9a9a9a" stroke-width="0.5" />
<line x1="25.4883" y1="250.693" x2="26.8924" y2="250.693" stroke="#9a9a9a" stroke-width="0.5" />
<line x1="25.4883" y1="254.481" x2="26.8924" y2="254.481" stroke="#9a9a9a" stroke-width="0.5" />
<line x1="25.4883" y1="258.268" x2="26.8924" y2="258.268" stroke="#9a9a9a" stroke-width="0.5" />
<line x1="25.4883" y1="262.056" x2="26.8924" y2="262.056" stroke="#9a9a9a" stroke-width="0.5" />
<line x1="25.4883" y1="265.843" x2="26.8924" y2="265.843" stroke="#9a9a9a" stroke-width="0.5" />
<line x1="25.4883" y1="269.631" x2="26.8924" y2="269.631" stroke="#9a9a9a" stroke-width="0.5" />
<line x1="25.4883" y1="273.418" x2="26.8924" y2="273.418" stroke="#9a9a9a" stroke-width="0.5" />
<line x1="25.4883" y1="277.206" x2="26.8924" y2="277.206" stroke="#9a9a9a" stroke-width="0.5" />
<line x1="25.4883" y1="280.993" x2="26.8924" y2="280.993" stroke="#9a9a9a" stroke-width="0.5" />
<line x1="25.4883" y1="284.781" x2="26.8924" y2="284.781" stroke="#9a9a9a" stroke-width="0.5" />
<line x1="25.4883" y1="288.568" x2="26.8924" y2="288.568" stroke="#9a9a9a" stroke-width="0.5" />
<line x1="25.4883" y1="292.356" x2="26.8924" y2="292.356" stroke="#9a9a9a" stroke-width="0.5" />
<path d="M28.92 292.36V291.26H32.09V292.36zM35.25 292.36V291.26H38.42V292.36zM38.42 292.36V291.26H41.59V292.36zM47.92 292.36V290.95H51.09V292.36zM51.09 292.36V289.24H54.26V292.36zM54.26 292.36V283.78H57.42V292.36zM57.42 292.36V279.25H60.59V292.36zM60.59 292.36V274.10H63.76V292.36zM63.76 292.36V265.52H66.92V292.36zM66.92 292.36V264.74H70.09V292.36zM70.09 292.36V259.75H73.26V292.36zM73.26 292.36V246.49H76.42V292.36zM76.42 292.36V228.86H79.59V292.36zM79.59 292.36V224.96H82.76V292.36zM82.76 292.36V228.86H85.93V292.36zM85.93 292.36V224.96H89.09V292.36zM89.09 292.36V225.74H92.26V292.36zM92.26 292.36V228.08H95.43V292.36zM95.43 292.36V246.49H98.59V292.36zM98.59 292.36V247.89H101.76V292.36zM101.76 292.36V268.17H104.93V292.36zM104.93 292.36V279.10H108.09V292.36zM108.09 292.36V280.81H111.26V292.36zM111.26 292.36V281.90H114.43V292.36zM114.43 292.36V288.14H117.59V292.36zM117.59 292.36V291.26H120.76V292.36zM127.10 292.36V291.11H130.26V292.36z" fill="#0000f0"/>
<line x1="50.2933" y1="221.217" x2="119.716" y2="221.217" stroke="#808080" stroke-width="0.7" />
<line x1="50.2933" y1="219.657" x2="50.2933" y2="222.777" stroke="#808080" stroke-width="0.7" />
<line x1="119.716" y1="219.657" x2="119.716" y2="222.777" stroke="#808080" stroke-width="0.7" />
<rect x="76.50" y="219.34" width="17.16" height="3.74" fill="#ffffff" stroke="#808080" stroke-width="0.7"/>
<line x1="85.5507" y1="219.345" x2="85.5507" y2="223.089" stroke="#606060" stroke-width="0.7" />
<circle cx="84.61" cy="221.22" r="0.9" fill="none" stroke="#606060" stroke-width="0.4"/>
<text x="78.06" y="217.78" font-size="2.8" text-anchor="middle" font-weight="bold" fill="#101010" >brakeTorque</text>
<text x="79.62" y="299.06" font-size="2.8" text-anchor="middle" font-weight="bold" fill="#101010" >Values (ft-lbs)</text>
<text transform="translate(24.24 258.50) rotate(-90)" font-size="2.6" font-weight="bold" text-anchor="middle" fill="#202020">Occurrences</text>
<rect x="26.0484" y="293.292" width="2.2" height="0.7" fill="#b0b0b0" />
<rect x="32.1693" y="293.292" width="2.2" height="0.7" fill="#b0b0b0" />
<rect x="38.2903" y="293.292" width="2.2" height="0.7" fill="#b0b0b0" />
<rect x="44.4112" y="293.292" width="2.2" height="0.7" fill="#b0b0b0" />
<rect x="50.5322" y="293.292" width="2.2" height="0.7" fill="#b0b0b0" />
<rect x="56.6531" y="293.292" width="2.2" height="0.7" fill="#b0b0b0" />
<rect x="62.7741" y="293.292" width="2.2" height="0.7" fill="#b0b0b0" />
<rect x="68.895" y="293.292" width="2.2" height="0.7" fill="#b0b0b0" />
<rect x="75.016" y="293.292" width="2.2" height="0.7" fill="#b0b0b0" />
<rect x="81.1369" y="293.292" width="2.2" height="0.7" fill="#b0b0b0" />
<rect x="87.2579" y="293.292" width="2.2" height="0.7" fill="#b0b0b0" />
<rect x="93.3788" y="293.292" width="2.2" height="0.7" fill="#b0b0b0" />
<rect x="99.4998" y="293.292" width="2.2" height="0.7" fill="#b0b0b0" />
<rect x="105.621" y="293.292" width="2.2" height="0.7" fill="#b0b0b0" />
<rect x="111.742" y="293.292" width="2.2" height="0.7" fill="#b0b0b0" />
<rect x="117.863" y="293.292" width="2.2" height="0.7" fill="#b0b0b0" />
<rect x="123.984" y="293.292" width="2.2" height="0.7" fill="#b0b0b0" />
<rect x="130.105" y="293.292" width="2.2" height="0.7" fill="#b0b0b0" />
<rect x="29.6685" y="295.164" width="1" height="1" fill="#202020" />
<rect x="127.952" y="295.164" width="1" height="1" fill="#202020" />
<rect x="136" y="314" width="2" height="102" fill="#b2b2b2" />
<rect x="21" y="414" width="117" height="2" fill="#b2b2b2" />
<rect x="18" y="311" width="118" height="103" fill="#000000" />
<rect x="19" y="312" width="116" height="101" fill="#ffffff" />
<rect x="19" y="312" width="116" height="14" fill="url(#g24)" />
<text x="22.60" y="323.20" font-size="11.4" textLength="34.30" lengthAdjust="spacingAndGlyphs" fill="#000000" >3: heat</text>
<rect x="27.05" y="334.18" width="104.06" height="68.17" fill="#ffffff" stroke="#b8b8b8" stroke-width="0.8"/>
<line x1="33.1693" y1="334.337" x2="33.1693" y2="402.356" stroke="#e4e4e4" stroke-width="0.6" />
<line x1="39.2903" y1="334.337" x2="39.2903" y2="402.356" stroke="#e4e4e4" stroke-width="0.6" />
<line x1="45.4112" y1="334.337" x2="45.4112" y2="402.356" stroke="#e4e4e4" stroke-width="0.6" />
<line x1="51.5322" y1="334.337" x2="51.5322" y2="402.356" stroke="#e4e4e4" stroke-width="0.6" />
<line x1="57.6531" y1="334.337" x2="57.6531" y2="402.356" stroke="#e4e4e4" stroke-width="0.6" />
<line x1="63.7741" y1="334.337" x2="63.7741" y2="402.356" stroke="#e4e4e4" stroke-width="0.6" />
<line x1="69.895" y1="334.337" x2="69.895" y2="402.356" stroke="#e4e4e4" stroke-width="0.6" />
<line x1="76.016" y1="334.337" x2="76.016" y2="402.356" stroke="#e4e4e4" stroke-width="0.6" />
<line x1="82.1369" y1="334.337" x2="82.1369" y2="402.356" stroke="#e4e4e4" stroke-width="0.6" />
<line x1="88.2579" y1="334.337" x2="88.2579" y2="402.356" stroke="#e4e4e4" stroke-width="0.6" />
<line x1="94.3788" y1="334.337" x2="94.3788" y2="402.356" stroke="#e4e4e4" stroke-width="0.6" />
<line x1="100.5" y1="334.337" x2="100.5" y2="402.356" stroke="#e4e4e4" stroke-width="0.6" />
<line x1="106.621" y1="334.337" x2="106.621" y2="402.356" stroke="#e4e4e4" stroke-width="0.6" />
<line x1="112.742" y1="334.337" x2="112.742" y2="402.356" stroke="#e4e4e4" stroke-width="0.6" />
<line x1="118.863" y1="334.337" x2="118.863" y2="402.356" stroke="#e4e4e4" stroke-width="0.6" />
<line x1="124.984" y1="334.337" x2="124.984" y2="402.356" stroke="#e4e4e4" stroke-width="0.6" />
<line x1="27.0484" y1="337.968" x2="131.105" y2="337.968" stroke="#ececec" stroke-width="0.6" />
<line x1="27.0484" y1="341.756" x2="131.105" y2="341.756" stroke="#ececec" stroke-width="0.6" />
<line x1="27.0484" y1="345.543" x2="131.105" y2="345.543" stroke="#ececec" stroke-width="0.6" />
<line x1="27.0484" y1="349.331" x2="131.105" y2="349.331" stroke="#ececec" stroke-width="0.6" />
<line x1="27.0484" y1="353.118" x2="131.105" y2="353.118" stroke="#ececec" stroke-width="0.6" />
<line x1="27.0484" y1="356.906" x2="131.105" y2="356.906" stroke="#ececec" stroke-width="0.6" />
<line x1="27.0484" y1="360.693" x2="131.105" y2="360.693" stroke="#ececec" stroke-width="0.6" />
<line x1="27.0484" y1="364.481" x2="131.105" y2="364.481" stroke="#ececec" stroke-width="0.6" />
<line x1="27.0484" y1="368.268" x2="131.105" y2="368.268" stroke="#ececec" stroke-width="0.6" />
<line x1="27.0484" y1="372.056" x2="131.105" y2="372.056" stroke="#ececec" stroke-width="0.6" />
<line x1="27.0484" y1="375.843" x2="131.105" y2="375.843" stroke="#ececec" stroke-width="0.6" />
<line x1="27.0484" y1="379.631" x2="131.105" y2="379.631" stroke="#ececec" stroke-width="0.6" />
<line x1="27.0484" y1="383.418" x2="131.105" y2="383.418" stroke="#ececec" stroke-width="0.6" />
<line x1="27.0484" y1="387.206" x2="131.105" y2="387.206" stroke="#ececec" stroke-width="0.6" />
<line x1="27.0484" y1="390.993" x2="131.105" y2="390.993" stroke="#ececec" stroke-width="0.6" />
<line x1="27.0484" y1="394.781" x2="131.105" y2="394.781" stroke="#ececec" stroke-width="0.6" />
<line x1="27.0484" y1="398.568" x2="131.105" y2="398.568" stroke="#ececec" stroke-width="0.6" />
<line x1="30.1685" y1="334.337" x2="30.1685" y2="402.356" stroke="#e8a0a0" stroke-width="0.6" stroke-dasharray="1 1"/>
<line x1="128.452" y1="334.337" x2="128.452" y2="402.356" stroke="#e8a0a0" stroke-width="0.6" stroke-dasharray="1 1"/>
<line x1="25.4883" y1="334.181" x2="26.8924" y2="334.181" stroke="#9a9a9a" stroke-width="0.5" />
<line x1="25.4883" y1="337.968" x2="26.8924" y2="337.968" stroke="#9a9a9a" stroke-width="0.5" />
<line x1="25.4883" y1="341.756" x2="26.8924" y2="341.756" stroke="#9a9a9a" stroke-width="0.5" />
<line x1="25.4883" y1="345.543" x2="26.8924" y2="345.543" stroke="#9a9a9a" stroke-width="0.5" />
<line x1="25.4883" y1="349.331" x2="26.8924" y2="349.331" stroke="#9a9a9a" stroke-width="0.5" />
<line x1="25.4883" y1="353.118" x2="26.8924" y2="353.118" stroke="#9a9a9a" stroke-width="0.5" />
<line x1="25.4883" y1="356.906" x2="26.8924" y2="356.906" stroke="#9a9a9a" stroke-width="0.5" />
<line x1="25.4883" y1="360.693" x2="26.8924" y2="360.693" stroke="#9a9a9a" stroke-width="0.5" />
<line x1="25.4883" y1="364.481" x2="26.8924" y2="364.481" stroke="#9a9a9a" stroke-width="0.5" />
<line x1="25.4883" y1="368.268" x2="26.8924" y2="368.268" stroke="#9a9a9a" stroke-width="0.5" />
<line x1="25.4883" y1="372.056" x2="26.8924" y2="372.056" stroke="#9a9a9a" stroke-width="0.5" />
<line x1="25.4883" y1="375.843" x2="26.8924" y2="375.843" stroke="#9a9a9a" stroke-width="0.5" />
<line x1="25.4883" y1="379.631" x2="26.8924" y2="379.631" stroke="#9a9a9a" stroke-width="0.5" />
<line x1="25.4883" y1="383.418" x2="26.8924" y2="383.418" stroke="#9a9a9a" stroke-width="0.5" />
<line x1="25.4883" y1="387.206" x2="26.8924" y2="387.206" stroke="#9a9a9a" stroke-width="0.5" />
<line x1="25.4883" y1="390.993" x2="26.8924" y2="390.993" stroke="#9a9a9a" stroke-width="0.5" />
<line x1="25.4883" y1="394.781" x2="26.8924" y2="394.781" stroke="#9a9a9a" stroke-width="0.5" />
<line x1="25.4883" y1="398.568" x2="26.8924" y2="398.568" stroke="#9a9a9a" stroke-width="0.5" />
<line x1="25.4883" y1="402.356" x2="26.8924" y2="402.356" stroke="#9a9a9a" stroke-width="0.5" />
<path d="M28.92 402.36V401.26H32.09V402.36zM35.25 402.36V401.26H38.42V402.36zM38.42 402.36V401.26H41.59V402.36zM47.92 402.36V400.95H51.09V402.36zM51.09 402.36V399.24H54.26V402.36zM54.26 402.36V393.78H57.42V402.36zM57.42 402.36V389.25H60.59V402.36zM60.59 402.36V384.10H63.76V402.36zM63.76 402.36V375.52H66.92V402.36zM66.92 402.36V374.74H70.09V402.36zM70.09 402.36V369.75H73.26V402.36zM73.26 402.36V356.49H76.42V402.36zM76.42 402.36V338.86H79.59V402.36zM79.59 402.36V334.96H82.76V402.36zM82.76 402.36V338.86H85.93V402.36zM85.93 402.36V334.96H89.09V402.36zM89.09 402.36V335.74H92.26V402.36zM92.26 402.36V338.08H95.43V402.36zM95.43 402.36V356.49H98.59V402.36zM98.59 402.36V357.89H101.76V402.36zM101.76 402.36V378.17H104.93V402.36zM104.93 402.36V389.10H108.09V402.36zM108.09 402.36V390.81H111.26V402.36zM111.26 402.36V391.90H114.43V402.36zM114.43 402.36V398.14H117.59V402.36zM117.59 402.36V401.26H120.76V402.36zM127.10 402.36V401.11H130.26V402.36z" fill="#0000f0"/>
<line x1="50.2933" y1="331.217" x2="119.716" y2="331.217" stroke="#808080" stroke-width="0.7" />
<line x1="50.2933" y1="329.657" x2="50.2933" y2="332.777" stroke="#808080" stroke-width="0.7" />
<line x1="119.716" y1="329.657" x2="119.716" y2="332.777" stroke="#808080" stroke-width="0.7" />
<rect x="76.50" y="329.34" width="17.16" height="3.74" fill="#ffffff" stroke="#808080" stroke-width="0.7"/>
<line x1="85.5507" y1="329.345" x2="85.5507" y2="333.089" stroke="#606060" stroke-width="0.7" />
<circle cx="84.61" cy="331.22" r="0.9" fill="none" stroke="#606060" stroke-width="0.4"/>
<text x="78.06" y="327.78" font-size="2.8" text-anchor="middle" font-weight="bold" fill="#101010" >heat</text>
<text x="79.62" y="409.06" font-size="2.8" text-anchor="middle" font-weight="bold" fill="#101010" >Values (kW)</text>
<text transform="translate(24.24 368.50) rotate(-90)" font-size="2.6" font-weight="bold" text-anchor="middle" fill="#202020">Occurrences</text>
<rect x="26.0484" y="403.292" width="2.2" height="0.7" fill="#b0b0b0" />
<rect x="32.1693" y="403.292" width="2.2" height="0.7" fill="#b0b0b0" />
<rect x="38.2903" y="403.292" width="2.2" height="0.7" fill="#b0b0b0" />
<rect x="44.4112" y="403.292" width="2.2" height="0.7" fill="#b0b0b0" />
<rect x="50.5322" y="403.292" width="2.2" height="0.7" fill="#b0b0b0" />
<rect x="56.6531" y="403.292" width="2.2" height="0.7" fill="#b0b0b0" />
<rect x="62.7741" y="403.292" width="2.2" height="0.7" fill="#b0b0b0" />
<rect x="68.895" y="403.292" width="2.2" height="0.7" fill="#b0b0b0" />
<rect x="75.016" y="403.292" width="2.2" height="0.7" fill="#b0b0b0" />
<rect x="81.1369" y="403.292" width="2.2" height="0.7" fill="#b0b0b0" />
<rect x="87.2579" y="403.292" width="2.2" height="0.7" fill="#b0b0b0" />
<rect x="93.3788" y="403.292" width="2.2" height="0.7" fill="#b0b0b0" />
<rect x="99.4998" y="403.292" width="2.2" height="0.7" fill="#b0b0b0" />
<rect x="105.621" y="403.292" width="2.2" height="0.7" fill="#b0b0b0" />
<rect x="111.742" y="403.292" width="2.2" height="0.7" fill="#b0b0b0" />
<rect x="117.863" y="403.292" width="2.2" height="0.7" fill="#b0b0b0" />
<rect x="123.984" y="403.292" width="2.2" height="0.7" fill="#b0b0b0" />
<rect x="130.105" y="403.292" width="2.2" height="0.7" fill="#b0b0b0" />
<rect x="29.6685" y="405.164" width="1" height="1" fill="#202020" />
<rect x="127.952" y="405.164" width="1" height="1" fill="#202020" />
<rect x="136" y="424" width="2" height="102" fill="#b2b2b2" />
<rect x="21" y="524" width="117" height="2" fill="#b2b2b2" />
<rect x="18" y="421" width="118" height="103" fill="#000000" />
<rect x="19" y="422" width="116" height="101" fill="#ffffff" />
<rect x="19" y="422" width="116" height="14" fill="url(#g24)" />
<text x="22.60" y="433.20" font-size="11.4" textLength="26.80" lengthAdjust="spacingAndGlyphs" fill="#000000" >4: life</text>
<rect x="27.05" y="444.18" width="104.06" height="68.17" fill="#ffffff" stroke="#b8b8b8" stroke-width="0.8"/>
<line x1="33.1693" y1="444.337" x2="33.1693" y2="512.356" stroke="#e4e4e4" stroke-width="0.6" />
<line x1="39.2903" y1="444.337" x2="39.2903" y2="512.356" stroke="#e4e4e4" stroke-width="0.6" />
<line x1="45.4112" y1="444.337" x2="45.4112" y2="512.356" stroke="#e4e4e4" stroke-width="0.6" />
<line x1="51.5322" y1="444.337" x2="51.5322" y2="512.356" stroke="#e4e4e4" stroke-width="0.6" />
<line x1="57.6531" y1="444.337" x2="57.6531" y2="512.356" stroke="#e4e4e4" stroke-width="0.6" />
<line x1="63.7741" y1="444.337" x2="63.7741" y2="512.356" stroke="#e4e4e4" stroke-width="0.6" />
<line x1="69.895" y1="444.337" x2="69.895" y2="512.356" stroke="#e4e4e4" stroke-width="0.6" />
<line x1="76.016" y1="444.337" x2="76.016" y2="512.356" stroke="#e4e4e4" stroke-width="0.6" />
<line x1="82.1369" y1="444.337" x2="82.1369" y2="512.356" stroke="#e4e4e4" stroke-width="0.6" />
<line x1="88.2579" y1="444.337" x2="88.2579" y2="512.356" stroke="#e4e4e4" stroke-width="0.6" />
<line x1="94.3788" y1="444.337" x2="94.3788" y2="512.356" stroke="#e4e4e4" stroke-width="0.6" />
<line x1="100.5" y1="444.337" x2="100.5" y2="512.356" stroke="#e4e4e4" stroke-width="0.6" />
<line x1="106.621" y1="444.337" x2="106.621" y2="512.356" stroke="#e4e4e4" stroke-width="0.6" />
<line x1="112.742" y1="444.337" x2="112.742" y2="512.356" stroke="#e4e4e4" stroke-width="0.6" />
<line x1="118.863" y1="444.337" x2="118.863" y2="512.356" stroke="#e4e4e4" stroke-width="0.6" />
<line x1="124.984" y1="444.337" x2="124.984" y2="512.356" stroke="#e4e4e4" stroke-width="0.6" />
<line x1="27.0484" y1="447.968" x2="131.105" y2="447.968" stroke="#ececec" stroke-width="0.6" />
<line x1="27.0484" y1="451.756" x2="131.105" y2="451.756" stroke="#ececec" stroke-width="0.6" />
<line x1="27.0484" y1="455.543" x2="131.105" y2="455.543" stroke="#ececec" stroke-width="0.6" />
<line x1="27.0484" y1="459.331" x2="131.105" y2="459.331" stroke="#ececec" stroke-width="0.6" />
<line x1="27.0484" y1="463.118" x2="131.105" y2="463.118" stroke="#ececec" stroke-width="0.6" />
<line x1="27.0484" y1="466.906" x2="131.105" y2="466.906" stroke="#ececec" stroke-width="0.6" />
<line x1="27.0484" y1="470.693" x2="131.105" y2="470.693" stroke="#ececec" stroke-width="0.6" />
<line x1="27.0484" y1="474.481" x2="131.105" y2="474.481" stroke="#ececec" stroke-width="0.6" />
<line x1="27.0484" y1="478.268" x2="131.105" y2="478.268" stroke="#ececec" stroke-width="0.6" />
<line x1="27.0484" y1="482.056" x2="131.105" y2="482.056" stroke="#ececec" stroke-width="0.6" />
<line x1="27.0484" y1="485.843" x2="131.105" y2="485.843" stroke="#ececec" stroke-width="0.6" />
<line x1="27.0484" y1="489.631" x2="131.105" y2="489.631" stroke="#ececec" stroke-width="0.6" />
<line x1="27.0484" y1="493.418" x2="131.105" y2="493.418" stroke="#ececec" stroke-width="0.6" />
<line x1="27.0484" y1="497.206" x2="131.105" y2="497.206" stroke="#ececec" stroke-width="0.6" />
<line x1="27.0484" y1="500.993" x2="131.105" y2="500.993" stroke="#ececec" stroke-width="0.6" />
<line x1="27.0484" y1="504.781" x2="131.105" y2="504.781" stroke="#ececec" stroke-width="0.6" />
<line x1="27.0484" y1="508.568" x2="131.105" y2="508.568" stroke="#ececec" stroke-width="0.6" />
<line x1="30.1685" y1="444.337" x2="30.1685" y2="512.356" stroke="#e8a0a0" stroke-width="0.6" stroke-dasharray="1 1"/>
<line x1="128.452" y1="444.337" x2="128.452" y2="512.356" stroke="#e8a0a0" stroke-width="0.6" stroke-dasharray="1 1"/>
<line x1="25.4883" y1="444.181" x2="26.8924" y2="444.181" stroke="#9a9a9a" stroke-width="0.5" />
<line x1="25.4883" y1="447.968" x2="26.8924" y2="447.968" stroke="#9a9a9a" stroke-width="0.5" />
<line x1="25.4883" y1="451.756" x2="26.8924" y2="451.756" stroke="#9a9a9a" stroke-width="0.5" />
<line x1="25.4883" y1="455.543" x2="26.8924" y2="455.543" stroke="#9a9a9a" stroke-width="0.5" />
<line x1="25.4883" y1="459.331" x2="26.8924" y2="459.331" stroke="#9a9a9a" stroke-width="0.5" />
<line x1="25.4883" y1="463.118" x2="26.8924" y2="463.118" stroke="#9a9a9a" stroke-width="0.5" />
<line x1="25.4883" y1="466.906" x2="26.8924" y2="466.906" stroke="#9a9a9a" stroke-width="0.5" />
<line x1="25.4883" y1="470.693" x2="26.8924" y2="470.693" stroke="#9a9a9a" stroke-width="0.5" />
<line x1="25.4883" y1="474.481" x2="26.8924" y2="474.481" stroke="#9a9a9a" stroke-width="0.5" />
<line x1="25.4883" y1="478.268" x2="26.8924" y2="478.268" stroke="#9a9a9a" stroke-width="0.5" />
<line x1="25.4883" y1="482.056" x2="26.8924" y2="482.056" stroke="#9a9a9a" stroke-width="0.5" />
<line x1="25.4883" y1="485.843" x2="26.8924" y2="485.843" stroke="#9a9a9a" stroke-width="0.5" />
<line x1="25.4883" y1="489.631" x2="26.8924" y2="489.631" stroke="#9a9a9a" stroke-width="0.5" />
<line x1="25.4883" y1="493.418" x2="26.8924" y2="493.418" stroke="#9a9a9a" stroke-width="0.5" />
<line x1="25.4883" y1="497.206" x2="26.8924" y2="497.206" stroke="#9a9a9a" stroke-width="0.5" />
<line x1="25.4883" y1="500.993" x2="26.8924" y2="500.993" stroke="#9a9a9a" stroke-width="0.5" />
<line x1="25.4883" y1="504.781" x2="26.8924" y2="504.781" stroke="#9a9a9a" stroke-width="0.5" />
<line x1="25.4883" y1="508.568" x2="26.8924" y2="508.568" stroke="#9a9a9a" stroke-width="0.5" />
<line x1="25.4883" y1="512.356" x2="26.8924" y2="512.356" stroke="#9a9a9a" stroke-width="0.5" />
<path d="M28.92 512.36V510.48H32.09V512.36zM32.09 512.36V509.24H35.25V512.36zM35.25 512.36V496.13H38.42V512.36zM38.42 512.36V487.39H41.59V512.36zM41.59 512.36V474.13H44.76V512.36zM44.76 512.36V451.20H47.92V512.36zM47.92 512.36V451.20H51.09V512.36zM51.09 512.36V447.61H54.26V512.36zM54.26 512.36V460.09H57.42V512.36zM57.42 512.36V463.99H60.59V512.36zM60.59 512.36V444.96H63.76V512.36zM63.76 512.36V457.91H66.92V512.36zM66.92 512.36V453.07H70.09V512.36zM70.09 512.36V457.13H73.26V512.36zM73.26 512.36V476.16H76.42V512.36zM76.42 512.36V449.64H79.59V512.36zM79.59 512.36V455.10H82.76V512.36zM82.76 512.36V464.93H85.93V512.36zM85.93 512.36V466.49H89.09V512.36zM89.09 512.36V489.42H92.26V512.36zM92.26 512.36V487.39H95.43V512.36zM95.43 512.36V495.20H98.59V512.36zM98.59 512.36V500.03H101.76V512.36zM101.76 512.36V503.93H104.93V512.36zM104.93 512.36V508.46H108.09V512.36zM108.09 512.36V508.46H111.26V512.36zM111.26 512.36V511.26H114.43V512.36zM127.10 512.36V510.95H130.26V512.36z" fill="#0000f0"/>
<line x1="31.2605" y1="441.217" x2="120.496" y2="441.217" stroke="#808080" stroke-width="0.7" />
<line x1="31.2605" y1="439.657" x2="31.2605" y2="442.777" stroke="#808080" stroke-width="0.7" />
<line x1="120.496" y1="439.657" x2="120.496" y2="442.777" stroke="#808080" stroke-width="0.7" />
<rect x="52.32" y="439.34" width="27.61" height="3.74" fill="#ffffff" stroke="#808080" stroke-width="0.7"/>
<line x1="66.3619" y1="439.345" x2="66.3619" y2="443.089" stroke="#606060" stroke-width="0.7" />
<circle cx="65.43" cy="441.22" r="0.9" fill="none" stroke="#606060" stroke-width="0.4"/>
<text x="48.11" y="437.78" font-size="2.8" text-anchor="middle" font-weight="bold" fill="#101010" >life</text>
<text x="79.62" y="519.06" font-size="2.8" text-anchor="middle" font-weight="bold" fill="#101010" >Values (driven miles)</text>
<text transform="translate(24.24 478.50) rotate(-90)" font-size="2.6" font-weight="bold" text-anchor="middle" fill="#202020">Occurrences</text>
<rect x="26.0484" y="513.292" width="2.2" height="0.7" fill="#b0b0b0" />
<rect x="32.1693" y="513.292" width="2.2" height="0.7" fill="#b0b0b0" />
<rect x="38.2903" y="513.292" width="2.2" height="0.7" fill="#b0b0b0" />
<rect x="44.4112" y="513.292" width="2.2" height="0.7" fill="#b0b0b0" />
<rect x="50.5322" y="513.292" width="2.2" height="0.7" fill="#b0b0b0" />
<rect x="56.6531" y="513.292" width="2.2" height="0.7" fill="#b0b0b0" />
<rect x="62.7741" y="513.292" width="2.2" height="0.7" fill="#b0b0b0" />
<rect x="68.895" y="513.292" width="2.2" height="0.7" fill="#b0b0b0" />
<rect x="75.016" y="513.292" width="2.2" height="0.7" fill="#b0b0b0" />
<rect x="81.1369" y="513.292" width="2.2" height="0.7" fill="#b0b0b0" />
<rect x="87.2579" y="513.292" width="2.2" height="0.7" fill="#b0b0b0" />
<rect x="93.3788" y="513.292" width="2.2" height="0.7" fill="#b0b0b0" />
<rect x="99.4998" y="513.292" width="2.2" height="0.7" fill="#b0b0b0" />
<rect x="105.621" y="513.292" width="2.2" height="0.7" fill="#b0b0b0" />
<rect x="111.742" y="513.292" width="2.2" height="0.7" fill="#b0b0b0" />
<rect x="117.863" y="513.292" width="2.2" height="0.7" fill="#b0b0b0" />
<rect x="123.984" y="513.292" width="2.2" height="0.7" fill="#b0b0b0" />
<rect x="130.105" y="513.292" width="2.2" height="0.7" fill="#b0b0b0" />
<rect x="29.6685" y="515.164" width="1" height="1" fill="#202020" />
<rect x="127.952" y="515.164" width="1" height="1" fill="#202020" />
<rect x="245" y="121" width="100" height="67" fill="#c7fdc7" />
<rect x="345" y="121" width="100" height="67" fill="#ffffff" />
<polyline points="378,142 384,165 370,158 391,182 370,153 383,171 372,155 384,158 392,174 354,151 351,158 369,143 405,173 436,137 413,153 360,144 434,170 427,157 438,155 437,160 381,159 380,164 415,149 420,141 404,145 361,142 417,145 431,153 417,154 373,142 363,135 365,141 376,140 434,173 376,145 405,175 364,154 375,147 367,161 430,145 368,157 356,156 410,157 360,143 412,153 416,144 382,128 414,150 425,139 363,158 375,136 384,150 422,145 361,165 357,162 439,144 385,166 420,153 351,154 388,144 429,151 370,164 357,145 364,149 393,146 435,167 412,167 355,149 427,165 389,149 353,146 363,168 377,151 399,164 373,153 363,149 416,165 389,141 379,175 358,135 360,155 361,141 390,155 354,166 350,154 369,153 375,145 354,129 363,142 374,156 402,161 414,140 423,174 409,150 432,157 381,156 425,156 375,151 407,154 364,142 420,157 382,138 436,168 427,162 364,161 355,150 383,160 375,164 438,130 416,158 432,170 427,143 388,147 395,183 375,146 387,152 438,156 352,155 398,171 412,163 428,147 396,148 365,143 404,149 398,144 408,159 410,157 390,145 428,155 406,151 375,151 423,132 390,169 426,127 371,145 431,166 403,136 361,131 407,146 375,152 390,158 438,131 366,141 400,144 364,171 379,150 403,143 398,169 358,144 438,157 421,149 369,172 393,156 356,127 397,168 434,156 357,147 406,151 389,152 351,153 416,156 428,150 361,152 362,147 390,171 393,171 368,151 401,136 422,155 431,162 351,169 360,134 365,149 426,142 372,137 420,158 376,130 386,149 429,149 378,167 388,154 419,148 367,149 391,157 419,157 405,148 396,159 421,163 401,137 365,153 423,153 429,146 374,157 364,157 353,162 432,135 364,127 436,166 370,133 365,136 415,155 389,153 387,152 407,158 366,148 416,148 440,157 353,143 409,158 393,129 437,162 418,140 404,126 375,152 414,152 410,152 382,150 360,138 405,129 431,152 418,150 414,168 368,168 361,157 371,145 387,138 369,149 385,179 411,162 351,130 405,168 426,158 403,152 378,156 374,173 389,166 427,163 401,135 374,146 362,151 401,159 361,168 420,149 409,154 431,156 403,167 362,135 410,130 430,166 388,138 433,142 354,139 395,150 361,154 406,158 400,163 381,151 352,160 362,127 381,141 412,160 353,155 354,146 361,137 361,141 412,168 412,156 411,166 405,153 375,160 366,152 425,150 433,165 357,168 420,164 363,149 407,152 433,162 388,164 372,153 429,146 406,152 381,164 410,143 416,175 364,159 428,163 384,159 378,172 406,161 376,165 415,144 420,162 370,151 397,168 424,140 399,170 407,158 415,159" fill="none" stroke="none" marker-start="url(#m)" marker-mid="url(#m)" marker-end="url(#m)"/>
<rect x="445" y="121" width="100" height="67" fill="#ffffff" />
<polyline points="475,142 511,165 500,158 538,182 493,153 521,171 496,155 500,158 526,174 489,151 501,158 476,143 524,173 467,137 493,153 479,144 519,170 499,157 495,155 504,160 503,159 510,164 486,149 474,141 480,145 475,142 480,145 493,153 494,154 476,142 464,135 474,141 472,140 524,173 481,145 527,175 495,154 482,147 505,161 480,145 500,157 498,156 499,157 476,143 493,153 479,144 453,128 487,150 470,139 500,158 466,136 488,150 480,145 511,165 507,162 478,144 513,166 492,153 495,154 478,144 489,151 509,164 480,145 487,149 481,146 515,167 515,167 486,149 512,165 486,149 481,146 516,168 489,151 510,164 492,153 487,149 511,165 474,141 527,175 465,135 496,155 473,141 495,155 513,166 495,154 493,153 480,145 454,129 475,142 497,156 506,161 472,140 526,174 488,150 499,157 498,156 498,156 490,151 495,154 476,142 499,157 468,138 517,168 507,162 505,161 488,150 504,160 510,164 457,130 501,158 520,170 476,143 483,147 540,183 481,146 492,152 498,156 495,155 521,171 508,163 483,147 484,148 476,143 486,149 479,144 502,159 499,157 479,145 496,155 490,151 490,151 459,132 518,169 452,127 480,145 513,166 467,136 458,131 482,146 490,152 501,158 458,131 474,141 478,144 521,171 488,150 477,143 517,169 478,144 500,157 487,149 523,172 498,156 452,127 516,168 498,156 483,147 489,151 490,152 493,153 498,156 488,150 491,152 483,147 522,171 521,171 490,151 465,136 495,155 507,162 517,169 463,134 486,149 476,142 468,137 501,158 456,130 487,149 486,149 514,167 494,154 485,148 486,149 498,157 499,157 484,148 502,159 509,163 467,137 492,153 492,153 482,146 500,157 499,157 506,162 464,135 451,127 512,166 462,133 465,136 496,155 493,153 491,152 500,158 484,148 485,148 500,157 477,143 500,158 454,129 507,162 472,140 450,126 491,152 492,152 491,152 487,150 468,138 455,129 491,152 488,150 516,168 516,168 499,157 480,145 469,138 486,149 533,179 507,162 456,130 516,168 500,158 490,152 498,156 524,173 514,166 509,163 464,135 481,146 489,151 502,159 517,168 486,149 494,154 497,156 514,167 464,135 456,130 513,166 468,138 475,142 470,139 489,150 494,154 500,158 508,163 490,151 503,160 451,127 473,141 503,160 496,155 481,146 468,137 474,141 516,168 498,156 513,166 492,153 504,160 491,152 488,150 511,165 517,168 510,164 486,149 491,152 507,162 510,164 492,153 482,146 491,152 510,164 477,143 528,175 502,159 508,163 502,159 522,172 506,161 512,165 479,144 506,162 490,151 516,168 472,140 519,170 500,158 503,159" fill="none" stroke="none" marker-start="url(#m)" marker-mid="url(#m)" marker-end="url(#m)"/>
<rect x="545" y="121" width="100" height="67" fill="#ffffff" />
<polyline points="575,142 611,165 600,158 638,182 593,153 621,171 596,155 600,158 626,174 589,151 601,158 576,143 624,173 567,137 593,153 579,144 619,170 599,157 595,155 604,160 603,159 610,164 586,149 574,141 580,145 575,142 580,145 593,153 594,154 576,142 564,135 574,141 572,140 624,173 581,145 627,175 595,154 582,147 605,161 580,145 600,157 598,156 599,157 576,143 593,153 579,144 553,128 587,150 570,139 600,158 566,136 588,150 580,145 611,165 607,162 578,144 613,166 592,153 595,154 578,144 589,151 609,164 580,145 587,149 581,146 615,167 615,167 586,149 612,165 586,149 581,146 616,168 589,151 610,164 592,153 587,149 611,165 574,141 627,175 565,135 596,155 573,141 595,155 613,166 595,154 593,153 580,145 554,129 575,142 597,156 606,161 572,140 626,174 588,150 599,157 598,156 598,156 590,151 595,154 576,142 599,157 568,138 617,168 607,162 605,161 588,150 604,160 610,164 557,130 601,158 620,170 576,143 583,147 640,183 581,146 592,152 598,156 595,155 621,171 608,163 583,147 584,148 576,143 586,149 579,144 602,159 599,157 579,145 596,155 590,151 590,151 559,132 618,169 552,127 580,145 613,166 567,136 558,131 582,146 590,152 601,158 558,131 574,141 578,144 621,171 588,150 577,143 617,169 578,144 600,157 587,149 623,172 598,156 552,127 616,168 598,156 583,147 589,151 590,152 593,153 598,156 588,150 591,152 583,147 622,171 621,171 590,151 565,136 595,155 607,162 617,169 563,134 586,149 576,142 568,137 601,158 556,130 587,149 586,149 614,167 594,154 585,148 586,149 598,157 599,157 584,148 602,159 609,163 567,137 592,153 592,153 582,146 600,157 599,157 606,162 564,135 551,127 612,166 562,133 565,136 596,155 593,153 591,152 600,158 584,148 585,148 600,157 577,143 600,158 554,129 607,162 572,140 550,126 591,152 592,152 591,152 587,150 568,138 555,129 591,152 588,150 616,168 616,168 599,157 580,145 569,138 586,149 633,179 607,162 556,130 616,168 600,158 590,152 598,156 624,173 614,166 609,163 564,135 581,146 589,151 602,159 617,168 586,149 594,154 597,156 614,167 564,135 556,130 613,166 568,138 575,142 570,139 589,150 594,154 600,158 608,163 590,151 603,160 551,127 573,141 603,160 596,155 581,146 568,137 574,141 616,168 598,156 613,166 592,153 604,160 591,152 588,150 611,165 617,168 610,164 586,149 591,152 607,162 610,164 592,153 582,146 591,152 610,164 577,143 628,175 602,159 608,163 602,159 622,172 606,161 612,165 579,144 606,162 590,151 616,168 572,140 619,170 600,158 603,159" fill="none" stroke="none" marker-start="url(#m)" marker-mid="url(#m)" marker-end="url(#m)"/>
<rect x="645" y="121" width="99" height="67" fill="#ffffff" />
<polyline points="686,142 673,165 670,158 665,182 672,153 668,171 672,155 679,158 671,174 662,151 656,158 678,143 679,173 731,137 701,153 670,144 699,170 707,157 716,155 710,160 676,159 671,164 706,149 716,141 702,145 673,142 711,145 712,153 703,154 681,142 679,135 676,141 685,140 696,173 681,145 678,175 667,154 680,147 665,161 720,145 668,157 661,156 696,157 671,143 700,153 710,144 698,128 705,150 722,139 664,158 687,136 684,150 714,145 658,165 658,162 727,144 673,166 706,153 658,154 692,144 714,151 665,164 667,145 670,149 694,146 702,167 689,167 664,149 700,165 689,149 665,146 658,168 679,151 683,164 674,153 670,149 693,165 694,141 663,175 674,135 664,155 673,141 685,155 653,166 657,154 671,153 681,145 675,129 674,142 673,156 687,161 713,140 689,174 701,150 710,157 677,156 706,156 677,151 696,154 675,142 703,157 691,138 702,168 703,162 663,161 663,150 676,160 668,164 739,130 699,158 697,170 720,143 690,147 666,183 681,146 685,152 714,156 658,155 677,171 692,163 716,147 694,148 676,143 699,149 698,144 693,159 696,157 693,145 709,155 698,151 677,151 727,132 674,169 733,127 678,145 701,166 708,136 679,131 703,146 677,152 682,158 737,131 677,141 700,144 656,171 681,150 703,143 679,169 670,144 713,157 710,149 659,172 685,156 677,127 679,168 712,156 667,147 699,151 686,152 659,153 700,156 714,150 667,152 670,147 672,171 674,171 672,151 707,136 706,155 705,162 650,169 677,134 671,149 720,142 684,137 701,158 692,130 686,149 715,149 668,167 684,154 709,148 673,149 684,157 702,157 700,148 686,159 697,163 706,137 669,153 708,153 718,146 672,157 666,157 655,162 730,135 684,127 704,166 685,133 680,136 701,155 685,153 685,152 694,158 673,148 708,148 714,157 666,143 695,158 706,129 708,162 715,140 717,126 676,152 702,152 701,152 683,150 675,138 715,129 714,152 707,150 689,168 661,168 663,157 678,145 695,138 674,149 664,179 692,162 672,130 684,168 705,158 696,152 676,156 661,173 675,166 701,163 708,135 680,146 668,151 688,159 657,168 709,149 698,154 710,156 684,167 678,135 718,130 700,166 696,138 724,142 669,139 691,150 666,154 693,158 685,163 681,151 655,160 683,127 689,141 695,160 659,155 665,146 675,137 673,141 688,168 698,156 689,166 696,153 671,160 670,152 712,150 703,165 654,168 697,164 670,149 698,152 706,162 677,164 674,153 718,146 698,152 673,164 707,143 684,175 664,159 702,163 678,159 665,172 690,161 668,165 710,144 699,162 673,151 679,168 720,140 679,170 693,158 697,159" fill="none" stroke="none" marker-start="url(#m)" marker-mid="url(#m)" marker-end="url(#m)"/>
<rect x="245" y="188" width="100" height="66" fill="#ffffff" />
<polyline points="315,232 279,228 290,236 252,223 297,237 269,229 294,235 290,228 264,223 301,247 289,248 314,237 266,215 323,196 297,210 311,243 271,197 291,201 295,194 286,195 287,229 280,230 304,209 316,206 310,215 315,242 310,207 297,199 296,207 314,235 326,241 316,240 318,233 266,197 309,233 263,215 295,241 308,234 285,238 310,199 290,238 292,245 291,212 314,243 297,210 311,208 337,229 303,209 320,202 290,241 324,234 302,228 310,204 279,242 283,244 312,194 277,227 298,205 295,248 312,225 301,200 281,237 310,245 303,240 309,222 275,196 275,210 304,246 278,201 304,225 309,247 274,241 301,232 280,219 298,235 303,241 279,208 316,224 263,231 325,244 294,243 317,242 295,224 277,246 295,249 297,237 310,234 336,246 315,241 293,234 284,217 318,209 264,203 302,212 291,198 292,230 292,202 300,233 295,214 314,240 291,205 322,229 273,196 283,201 285,240 302,246 286,229 280,233 333,194 289,208 270,198 314,201 307,225 250,221 309,233 298,226 292,194 295,248 269,219 282,210 307,200 306,221 314,239 304,216 311,219 288,213 291,212 311,224 294,201 300,214 300,234 331,204 272,224 338,201 310,236 277,198 323,216 332,242 308,214 300,233 289,224 332,195 316,239 312,218 269,240 302,231 313,216 273,219 312,244 290,194 303,205 267,237 292,222 338,245 274,220 292,197 307,245 301,214 300,225 297,248 292,208 302,200 299,242 307,241 268,224 269,223 300,238 325,217 295,204 283,198 273,248 327,243 304,240 314,201 322,235 289,206 334,233 303,226 304,200 276,232 296,225 305,206 304,239 292,223 291,206 306,215 288,221 281,205 323,217 298,239 298,203 308,200 290,234 291,240 284,247 326,198 339,241 278,195 328,237 325,240 294,208 297,224 299,226 290,213 306,239 305,208 290,193 313,247 290,212 336,222 283,195 318,207 340,215 299,233 298,209 299,212 303,229 322,243 335,215 299,198 302,207 274,209 274,237 291,242 310,236 321,226 304,237 257,227 283,211 334,248 274,215 290,202 300,216 292,231 266,234 276,225 281,201 326,217 309,234 301,242 288,217 273,242 304,205 296,212 293,198 276,216 326,242 334,212 277,199 322,226 315,198 320,247 301,221 296,242 290,214 282,218 300,230 287,248 339,241 317,230 287,210 294,247 309,246 322,242 316,242 274,211 292,210 277,211 298,215 286,233 299,239 302,203 279,197 273,245 280,205 304,241 299,213 283,197 280,225 298,236 308,200 299,214 280,229 313,212 262,208 288,240 282,200 288,228 268,232 284,214 278,233 311,208 284,205 300,237 274,220 318,203 271,218 290,214 287,208" fill="none" stroke="none" marker-start="url(#m)" marker-mid="url(#m)" marker-end="url(#m)"/>
<rect x="345" y="188" width="100" height="66" fill="#c7fdc7" />
<rect x="445" y="188" width="100" height="66" fill="#ffffff" />
<polyline points="475,232 511,228 500,236 538,223 493,237 521,229 496,235 500,228 526,223 489,247 501,248 476,237 524,215 467,196 493,210 479,243 519,197 499,201 495,194 504,195 503,229 510,230 486,209 474,206 480,215 475,242 480,207 493,199 494,207 476,235 464,241 474,240 472,233 524,197 481,233 527,215 495,241 482,234 505,238 480,199 500,238 498,245 499,212 476,243 493,210 479,208 453,229 487,209 470,202 500,241 466,234 488,228 480,204 511,242 507,244 478,194 513,227 492,205 495,248 478,225 489,200 509,237 480,245 487,240 481,222 515,196 515,210 486,246 512,201 486,225 481,247 516,241 489,232 510,219 492,235 487,241 511,208 474,224 527,231 465,244 496,243 473,242 495,224 513,246 495,249 493,237 480,234 454,246 475,241 497,234 506,217 472,209 526,203 488,212 499,198 498,230 498,202 490,233 495,214 476,240 499,205 468,229 517,196 507,201 505,240 488,246 504,229 510,233 457,194 501,208 520,198 476,201 483,225 540,221 481,233 492,226 498,194 495,248 521,219 508,210 483,200 484,221 476,239 486,216 479,219 502,213 499,212 479,224 496,201 490,214 490,234 459,204 518,224 452,201 480,236 513,198 467,216 458,242 482,214 490,233 501,224 458,195 474,239 478,218 521,240 488,231 477,216 517,219 478,244 500,194 487,205 523,237 498,222 452,245 516,220 498,197 483,245 489,214 490,225 493,248 498,208 488,200 491,242 483,241 522,224 521,223 490,238 465,217 495,204 507,198 517,248 463,243 486,240 476,201 468,235 501,206 456,233 487,226 486,200 514,232 494,225 485,206 486,239 498,223 499,206 484,215 502,221 509,205 467,217 492,239 492,203 482,200 500,234 499,240 506,247 464,198 451,241 512,195 462,237 465,240 496,208 493,224 491,226 500,213 484,239 485,208 500,193 477,247 500,212 454,222 507,195 472,207 450,215 491,233 492,209 491,212 487,229 468,243 455,215 491,198 488,207 516,209 516,237 499,242 480,236 469,226 486,237 533,227 507,211 456,248 516,215 500,202 490,216 498,231 524,234 514,225 509,201 464,217 481,234 489,242 502,217 517,242 486,205 494,212 497,198 514,216 464,242 456,212 513,199 468,226 475,198 470,247 489,221 494,242 500,214 508,218 490,230 503,248 451,241 473,230 503,210 496,247 481,246 468,242 474,242 516,211 498,210 513,211 492,215 504,233 491,239 488,203 511,197 517,245 510,205 486,241 491,213 507,197 510,225 492,236 482,200 491,214 510,229 477,212 528,208 502,240 508,200 502,228 522,232 506,214 512,233 479,208 506,205 490,237 516,220 472,203 519,218 500,214 503,208" fill="none" stroke="none" marker-start="url(#m)" marker-mid="url(#m)" marker-end="url(#m)"/>
<rect x="545" y="188" width="100" height="66" fill="#ffffff" />
<polyline points="575,232 611,228 600,236 638,223 593,237 621,229 596,235 600,228 626,223 589,247 601,248 576,237 624,215 567,196 593,210 579,243 619,197 599,201 595,194 604,195 603,229 610,230 586,209 574,206 580,215 575,242 580,207 593,199 594,207 576,235 564,241 574,240 572,233 624,197 581,233 627,215 595,241 582,234 605,238 580,199 600,238 598,245 599,212 576,243 593,210 579,208 553,229 587,209 570,202 600,241 566,234 588,228 580,204 611,242 607,244 578,194 613,227 592,205 595,248 578,225 589,200 609,237 580,245 587,240 581,222 615,196 615,210 586,246 612,201 586,225 581,247 616,241 589,232 610,219 592,235 587,241 611,208 574,224 627,231 565,244 596,243 573,242 595,224 613,246 595,249 593,237 580,234 554,246 575,241 597,234 606,217 572,209 626,203 588,212 599,198 598,230 598,202 590,233 595,214 576,240 599,205 568,229 617,196 607,201 605,240 588,246 604,229 610,233 557,194 601,208 620,198 576,201 583,225 640,221 581,233 592,226 598,194 595,248 621,219 608,210 583,200 584,221 576,239 586,216 579,219 602,213 599,212 579,224 596,201 590,214 590,234 559,204 618,224 552,201 580,236 613,198 567,216 558,242 582,214 590,233 601,224 558,195 574,239 578,218 621,240 588,231 577,216 617,219 578,244 600,194 587,205 623,237 598,222 552,245 616,220 598,197 583,245 589,214 590,225 593,248 598,208 588,200 591,242 583,241 622,224 621,223 590,238 565,217 595,204 607,198 617,248 563,243 586,240 576,201 568,235 601,206 556,233 587,226 586,200 614,232 594,225 585,206 586,239 598,223 599,206 584,215 602,221 609,205 567,217 592,239 592,203 582,200 600,234 599,240 606,247 564,198 551,241 612,195 562,237 565,240 596,208 593,224 591,226 600,213 584,239 585,208 600,193 577,247 600,212 554,222 607,195 572,207 550,215 591,233 592,209 591,212 587,229 568,243 555,215 591,198 588,207 616,209 616,237 599,242 580,236 569,226 586,237 633,227 607,211 556,248 616,215 600,202 590,216 598,231 624,234 614,225 609,201 564,217 581,234 589,242 602,217 617,242 586,205 594,212 597,198 614,216 564,242 556,212 613,199 568,226 575,198 570,247 589,221 594,242 600,214 608,218 590,230 603,248 551,241 573,230 603,210 596,247 581,246 568,242 574,242 616,211 598,210 613,211 592,215 604,233 591,239 588,203 611,197 617,245 610,205 586,241 591,213 607,197 610,225 592,236 582,200 591,214 610,229 577,212 628,208 602,240 608,200 602,228 622,232 606,214 612,233 579,208 606,205 590,237 616,220 572,203 619,218 600,214 603,208" fill="none" stroke="none" marker-start="url(#m)" marker-mid="url(#m)" marker-end="url(#m)"/>
<rect x="645" y="188" width="99" height="66" fill="#ffffff" />
<polyline points="686,232 673,228 670,236 665,223 672,237 668,229 672,235 679,228 671,223 662,247 656,248 678,237 679,215 731,196 701,210 670,243 699,197 707,201 716,194 710,195 676,229 671,230 706,209 716,206 702,215 673,242 711,207 712,199 703,207 681,235 679,241 676,240 685,233 696,197 681,233 678,215 667,241 680,234 665,238 720,199 668,238 661,245 696,212 671,243 700,210 710,208 698,229 705,209 722,202 664,241 687,234 684,228 714,204 658,242 658,244 727,194 673,227 706,205 658,248 692,225 714,200 665,237 667,245 670,240 694,222 702,196 689,210 664,246 700,201 689,225 665,247 658,241 679,232 683,219 674,235 670,241 693,208 694,224 663,231 674,244 664,243 673,242 685,224 653,246 657,249 671,237 681,234 675,246 674,241 673,234 687,217 713,209 689,203 701,212 710,198 677,230 706,202 677,233 696,214 675,240 703,205 691,229 702,196 703,201 663,240 663,246 676,229 668,233 739,194 699,208 697,198 720,201 690,225 666,221 681,233 685,226 714,194 658,248 677,219 692,210 716,200 694,221 676,239 699,216 698,219 693,213 696,212 693,224 709,201 698,214 677,234 727,204 674,224 733,201 678,236 701,198 708,216 679,242 703,214 677,233 682,224 737,195 677,239 700,218 656,240 681,231 703,216 679,219 670,244 713,194 710,205 659,237 685,222 677,245 679,220 712,197 667,245 699,214 686,225 659,248 700,208 714,200 667,242 670,241 672,224 674,223 672,238 707,217 706,204 705,198 650,248 677,243 671,240 720,201 684,235 701,206 692,233 686,226 715,200 668,232 684,225 709,206 673,239 684,223 702,206 700,215 686,221 697,205 706,217 669,239 708,203 718,200 672,234 666,240 655,247 730,198 684,241 704,195 685,237 680,240 701,208 685,224 685,226 694,213 673,239 708,208 714,193 666,247 695,212 706,222 708,195 715,207 717,215 676,233 702,209 701,212 683,229 675,243 715,215 714,198 707,207 689,209 661,237 663,242 678,236 695,226 674,237 664,227 692,211 672,248 684,215 705,202 696,216 676,231 661,234 675,225 701,201 708,217 680,234 668,242 688,217 657,242 709,205 698,212 710,198 684,216 678,242 718,212 700,199 696,226 724,198 669,247 691,221 666,242 693,214 685,218 681,230 655,248 683,241 689,230 695,210 659,247 665,246 675,242 673,242 688,211 698,210 689,211 696,215 671,233 670,239 712,203 703,197 654,245 697,205 670,241 698,213 706,197 677,225 674,236 718,200 698,214 673,229 707,212 684,208 664,240 702,200 678,228 665,232 690,214 668,233 710,208 699,205 673,237 679,220 720,203 679,218 693,214 697,208" fill="none" stroke="none" marker-start="url(#m)" marker-mid="url(#m)" marker-end="url(#m)"/>
<rect x="245" y="254" width="100" height="67" fill="#ffffff" />
<polyline points="315,300 279,277 290,284 252,260 297,289 269,271 294,287 290,284 264,268 301,291 289,284 314,299 266,269 323,305 297,289 311,298 271,272 291,285 295,287 286,282 287,283 280,278 304,293 316,301 310,297 315,300 310,297 297,289 296,288 314,300 326,307 316,301 318,302 266,269 309,297 263,267 295,288 308,295 285,281 310,297 290,285 292,286 291,285 314,299 297,289 311,298 337,314 303,292 320,303 290,284 324,306 302,292 310,297 279,277 283,280 312,298 277,276 298,289 295,288 312,298 301,291 281,278 310,297 303,293 309,296 275,275 275,275 304,293 278,277 304,293 309,296 274,274 301,291 280,278 298,289 303,293 279,277 316,301 263,267 325,307 294,287 317,301 295,287 277,276 295,288 297,289 310,297 336,313 315,300 293,286 284,281 318,302 264,268 302,292 291,285 292,286 292,286 300,291 295,288 314,300 291,285 322,304 273,274 283,280 285,281 302,292 286,282 280,278 333,312 289,284 270,272 314,299 307,295 250,259 309,296 298,290 292,286 295,287 269,271 282,279 307,295 306,294 314,299 304,293 311,298 288,283 291,285 311,297 294,287 300,291 300,291 331,310 272,273 338,315 310,297 277,276 323,306 332,311 308,296 300,290 289,284 332,311 316,301 312,298 269,271 302,292 313,299 273,273 312,298 290,285 303,293 267,270 292,286 338,315 274,274 292,286 307,295 301,291 300,290 297,289 292,286 302,292 299,290 307,295 268,271 269,271 300,291 325,306 295,287 283,280 273,273 327,308 304,293 314,300 322,305 289,284 334,312 303,293 304,293 276,275 296,288 305,294 304,293 292,285 291,285 306,294 288,283 281,279 323,305 298,289 298,289 308,296 290,285 291,285 284,280 326,307 339,315 278,276 328,309 325,306 294,287 297,289 299,290 290,284 306,294 305,294 290,285 313,299 290,284 336,313 283,280 318,302 340,316 299,290 298,290 299,290 303,292 322,304 335,313 299,290 302,292 274,274 274,274 291,285 310,297 321,304 304,293 257,263 283,280 334,312 274,274 290,284 300,290 292,286 266,269 276,276 281,279 326,307 309,296 301,291 288,283 273,274 304,293 296,288 293,286 276,275 326,307 334,312 277,276 322,304 315,300 320,303 301,292 296,288 290,284 282,279 300,291 287,282 339,315 317,301 287,282 294,287 309,296 322,305 316,301 274,274 292,286 277,276 298,289 286,282 299,290 302,292 279,277 273,274 280,278 304,293 299,290 283,280 280,278 298,289 308,296 299,290 280,278 313,299 262,267 288,283 282,279 288,283 268,270 284,281 278,277 311,298 284,280 300,291 274,274 318,302 271,272 290,284 287,283" fill="none" stroke="none" marker-start="url(#m)" marker-mid="url(#m)" marker-end="url(#m)"/>
<rect x="345" y="254" width="100" height="67" fill="#ffffff" />
<polyline points="378,300 384,277 370,284 391,260 370,289 383,271 372,287 384,284 392,268 354,291 351,284 369,299 405,269 436,305 413,289 360,298 434,272 427,285 438,287 437,282 381,283 380,278 415,293 420,301 404,297 361,300 417,297 431,289 417,288 373,300 363,307 365,301 376,302 434,269 376,297 405,267 364,288 375,295 367,281 430,297 368,285 356,286 410,285 360,299 412,289 416,298 382,314 414,292 425,303 363,284 375,306 384,292 422,297 361,277 357,280 439,298 385,276 420,289 351,288 388,298 429,291 370,278 357,297 364,293 393,296 435,275 412,275 355,293 427,277 389,293 353,296 363,274 377,291 399,278 373,289 363,293 416,277 389,301 379,267 358,307 360,287 361,301 390,287 354,276 350,288 369,289 375,297 354,313 363,300 374,286 402,281 414,302 423,268 409,292 432,285 381,286 425,286 375,291 407,288 364,300 420,285 382,304 436,274 427,280 364,281 355,292 383,282 375,278 438,312 416,284 432,272 427,299 388,295 395,259 375,296 387,290 438,286 352,287 398,271 412,279 428,295 396,294 365,299 404,293 398,298 408,283 410,285 390,297 428,287 406,291 375,291 423,310 390,273 426,315 371,297 431,276 403,306 361,311 407,296 375,290 390,284 438,311 366,301 400,298 364,271 379,292 403,299 398,273 358,298 438,285 421,293 369,270 393,286 356,315 397,274 434,286 357,295 406,291 389,290 351,289 416,286 428,292 361,290 362,295 390,271 393,271 368,291 401,306 422,287 431,280 351,273 360,308 365,293 426,300 372,305 420,284 376,312 386,293 429,293 378,275 388,288 419,294 367,293 391,285 419,285 405,294 396,283 421,279 401,305 365,289 423,289 429,296 374,285 364,285 353,280 432,307 364,315 436,276 370,309 365,306 415,287 389,289 387,290 407,284 366,294 416,294 440,285 353,299 409,284 393,313 437,280 418,302 404,316 375,290 414,290 410,290 382,292 360,304 405,313 431,290 418,292 414,274 368,274 361,285 371,297 387,304 369,293 385,263 411,280 351,312 405,274 426,284 403,290 378,286 374,269 389,276 427,279 401,307 374,296 362,291 401,283 361,274 420,293 409,288 431,286 403,275 362,307 410,312 430,276 388,304 433,300 354,303 395,292 361,288 406,284 400,279 381,291 352,282 362,315 381,301 412,282 353,287 354,296 361,305 361,301 412,274 412,286 411,276 405,289 375,282 366,290 425,292 433,277 357,274 420,278 363,293 407,290 433,280 388,278 372,289 429,296 406,290 381,278 410,299 416,267 364,283 428,279 384,283 378,270 406,281 376,277 415,298 420,280 370,291 397,274 424,302 399,272 407,284 415,283" fill="none" stroke="none" marker-start="url(#m)" marker-mid="url(#m)" marker-end="url(#m)"/>
<rect x="445" y="254" width="100" height="67" fill="#95c8fd" />
<rect x="545" y="254" width="100" height="67" fill="#ffffff" />
<polyline points="575,300 611,277 600,284 638,260 593,289 621,271 596,287 600,284 626,268 589,291 601,284 576,299 624,269 567,305 593,289 579,298 619,272 599,285 595,287 604,282 603,283 610,278 586,293 574,301 580,297 575,300 580,297 593,289 594,288 576,300 564,307 574,301 572,302 624,269 581,297 627,267 595,288 582,295 605,281 580,297 600,285 598,286 599,285 576,299 593,289 579,298 553,314 587,292 570,303 600,284 566,306 588,292 580,297 611,277 607,280 578,298 613,276 592,289 595,288 578,298 589,291 609,278 580,297 587,293 581,296 615,275 615,275 586,293 612,277 586,293 581,296 616,274 589,291 610,278 592,289 587,293 611,277 574,301 627,267 565,307 596,287 573,301 595,287 613,276 595,288 593,289 580,297 554,313 575,300 597,286 606,281 572,302 626,268 588,292 599,285 598,286 598,286 590,291 595,288 576,300 599,285 568,304 617,274 607,280 605,281 588,292 604,282 610,278 557,312 601,284 620,272 576,299 583,295 640,259 581,296 592,290 598,286 595,287 621,271 608,279 583,295 584,294 576,299 586,293 579,298 602,283 599,285 579,297 596,287 590,291 590,291 559,310 618,273 552,315 580,297 613,276 567,306 558,311 582,296 590,290 601,284 558,311 574,301 578,298 621,271 588,292 577,299 617,273 578,298 600,285 587,293 623,270 598,286 552,315 616,274 598,286 583,295 589,291 590,290 593,289 598,286 588,292 591,290 583,295 622,271 621,271 590,291 565,306 595,287 607,280 617,273 563,308 586,293 576,300 568,305 601,284 556,312 587,293 586,293 614,275 594,288 585,294 586,293 598,285 599,285 584,294 602,283 609,279 567,305 592,289 592,289 582,296 600,285 599,285 606,280 564,307 551,315 612,276 562,309 565,306 596,287 593,289 591,290 600,284 584,294 585,294 600,285 577,299 600,284 554,313 607,280 572,302 550,316 591,290 592,290 591,290 587,292 568,304 555,313 591,290 588,292 616,274 616,274 599,285 580,297 569,304 586,293 633,263 607,280 556,312 616,274 600,284 590,290 598,286 624,269 614,276 609,279 564,307 581,296 589,291 602,283 617,274 586,293 594,288 597,286 614,275 564,307 556,312 613,276 568,304 575,300 570,303 589,292 594,288 600,284 608,279 590,291 603,282 551,315 573,301 603,282 596,287 581,296 568,305 574,301 616,274 598,286 613,276 592,289 604,282 591,290 588,292 611,277 617,274 610,278 586,293 591,290 607,280 610,278 592,289 582,296 591,290 610,278 577,299 628,267 602,283 608,279 602,283 622,270 606,281 612,277 579,298 606,280 590,291 616,274 572,302 619,272 600,284 603,283" fill="none" stroke="none" marker-start="url(#m)" marker-mid="url(#m)" marker-end="url(#m)"/>
<rect x="645" y="254" width="99" height="67" fill="#ffffff" />
<polyline points="686,300 673,277 670,284 665,260 672,289 668,271 672,287 679,284 671,268 662,291 656,284 678,299 679,269 731,305 701,289 670,298 699,272 707,285 716,287 710,282 676,283 671,278 706,293 716,301 702,297 673,300 711,297 712,289 703,288 681,300 679,307 676,301 685,302 696,269 681,297 678,267 667,288 680,295 665,281 720,297 668,285 661,286 696,285 671,299 700,289 710,298 698,314 705,292 722,303 664,284 687,306 684,292 714,297 658,277 658,280 727,298 673,276 706,289 658,288 692,298 714,291 665,278 667,297 670,293 694,296 702,275 689,275 664,293 700,277 689,293 665,296 658,274 679,291 683,278 674,289 670,293 693,277 694,301 663,267 674,307 664,287 673,301 685,287 653,276 657,288 671,289 681,297 675,313 674,300 673,286 687,281 713,302 689,268 701,292 710,285 677,286 706,286 677,291 696,288 675,300 703,285 691,304 702,274 703,280 663,281 663,292 676,282 668,278 739,312 699,284 697,272 720,299 690,295 666,259 681,296 685,290 714,286 658,287 677,271 692,279 716,295 694,294 676,299 699,293 698,298 693,283 696,285 693,297 709,287 698,291 677,291 727,310 674,273 733,315 678,297 701,276 708,306 679,311 703,296 677,290 682,284 737,311 677,301 700,298 656,271 681,292 703,299 679,273 670,298 713,285 710,293 659,270 685,286 677,315 679,274 712,286 667,295 699,291 686,290 659,289 700,286 714,292 667,290 670,295 672,271 674,271 672,291 707,306 706,287 705,280 650,273 677,308 671,293 720,300 684,305 701,284 692,312 686,293 715,293 668,275 684,288 709,294 673,293 684,285 702,285 700,294 686,283 697,279 706,305 669,289 708,289 718,296 672,285 666,285 655,280 730,307 684,315 704,276 685,309 680,306 701,287 685,289 685,290 694,284 673,294 708,294 714,285 666,299 695,284 706,313 708,280 715,302 717,316 676,290 702,290 701,290 683,292 675,304 715,313 714,290 707,292 689,274 661,274 663,285 678,297 695,304 674,293 664,263 692,280 672,312 684,274 705,284 696,290 676,286 661,269 675,276 701,279 708,307 680,296 668,291 688,283 657,274 709,293 698,288 710,286 684,275 678,307 718,312 700,276 696,304 724,300 669,303 691,292 666,288 693,284 685,279 681,291 655,282 683,315 689,301 695,282 659,287 665,296 675,305 673,301 688,274 698,286 689,276 696,289 671,282 670,290 712,292 703,277 654,274 697,278 670,293 698,290 706,280 677,278 674,289 718,296 698,290 673,278 707,299 684,267 664,283 702,279 678,283 665,270 690,281 668,277 710,298 699,280 673,291 679,274 720,302 679,272 693,284 697,283" fill="none" stroke="none" marker-start="url(#m)" marker-mid="url(#m)" marker-end="url(#m)"/>
<rect x="245" y="321" width="100" height="67" fill="#ffffff" />
<polyline points="315,367 279,344 290,351 252,327 297,356 269,338 294,354 290,351 264,335 301,358 289,351 314,366 266,336 323,372 297,356 311,365 271,339 291,352 295,354 286,349 287,350 280,345 304,360 316,368 310,364 315,367 310,364 297,356 296,355 314,367 326,374 316,368 318,369 266,336 309,364 263,334 295,355 308,362 285,348 310,364 290,352 292,353 291,352 314,366 297,356 311,365 337,381 303,359 320,370 290,351 324,373 302,359 310,364 279,344 283,347 312,365 277,343 298,356 295,355 312,365 301,358 281,345 310,364 303,360 309,363 275,342 275,342 304,360 278,344 304,360 309,363 274,341 301,358 280,345 298,356 303,360 279,344 316,368 263,334 325,374 294,354 317,368 295,354 277,343 295,354 297,356 310,364 336,380 315,367 293,353 284,348 318,369 264,335 302,359 291,352 292,353 292,353 300,358 295,355 314,367 291,352 322,371 273,341 283,347 285,348 302,359 286,349 280,345 333,379 289,351 270,339 314,366 307,362 250,326 309,363 298,357 292,353 295,354 269,338 282,346 307,362 306,361 314,366 304,360 311,365 288,350 291,352 311,364 294,354 300,358 300,358 331,377 272,340 338,382 310,364 277,343 323,373 332,378 308,363 300,357 289,351 332,378 316,368 312,365 269,338 302,359 313,366 273,340 312,365 290,352 303,360 267,337 292,353 338,382 274,341 292,353 307,362 301,358 300,357 297,356 292,353 302,359 299,357 307,362 268,338 269,338 300,358 325,373 295,354 283,347 273,340 327,375 304,360 314,367 322,372 289,351 334,379 303,360 304,360 276,342 296,355 305,361 304,360 292,352 291,352 306,361 288,350 281,346 323,372 298,356 298,356 308,363 290,352 291,352 284,347 326,374 339,382 278,343 328,376 325,373 294,354 297,356 299,357 290,351 306,361 305,361 290,352 313,366 290,351 336,380 283,347 318,369 340,383 299,357 298,357 299,357 303,359 322,371 335,380 299,357 302,359 274,341 274,341 291,352 310,364 321,371 304,360 257,330 283,347 334,379 274,341 290,351 300,357 292,353 266,336 276,343 281,346 326,374 309,363 301,358 288,350 273,341 304,360 296,355 293,353 276,342 326,374 334,379 277,343 322,371 315,367 320,370 301,359 296,355 290,351 282,346 300,358 287,349 339,382 317,368 287,349 294,354 309,363 322,372 316,368 274,341 292,353 277,343 298,356 286,349 299,357 302,359 279,344 273,341 280,345 304,360 299,357 283,347 280,345 298,356 308,363 299,357 280,345 313,366 262,334 288,350 282,346 288,350 268,337 284,348 278,344 311,365 284,347 300,358 274,341 318,369 271,339 290,351 287,350" fill="none" stroke="none" marker-start="url(#m)" marker-mid="url(#m)" marker-end="url(#m)"/>
<rect x="345" y="321" width="100" height="67" fill="#ffffff" />
<polyline points="378,367 384,344 370,351 391,327 370,356 383,338 372,354 384,351 392,335 354,358 351,351 369,366 405,336 436,372 413,356 360,365 434,339 427,352 438,354 437,349 381,350 380,345 415,360 420,368 404,364 361,367 417,364 431,356 417,355 373,367 363,374 365,368 376,369 434,336 376,364 405,334 364,355 375,362 367,348 430,364 368,352 356,353 410,352 360,366 412,356 416,365 382,381 414,359 425,370 363,351 375,373 384,359 422,364 361,344 357,347 439,365 385,343 420,356 351,355 388,365 429,358 370,345 357,364 364,360 393,363 435,342 412,342 355,360 427,344 389,360 353,363 363,341 377,358 399,345 373,356 363,360 416,344 389,368 379,334 358,374 360,354 361,368 390,354 354,343 350,354 369,356 375,364 354,380 363,367 374,353 402,348 414,369 423,335 409,359 432,352 381,353 425,353 375,358 407,355 364,367 420,352 382,371 436,341 427,347 364,348 355,359 383,349 375,345 438,379 416,351 432,339 427,366 388,362 395,326 375,363 387,357 438,353 352,354 398,338 412,346 428,362 396,361 365,366 404,360 398,365 408,350 410,352 390,364 428,354 406,358 375,358 423,377 390,340 426,382 371,364 431,343 403,373 361,378 407,363 375,357 390,351 438,378 366,368 400,365 364,338 379,359 403,366 398,340 358,365 438,352 421,360 369,337 393,353 356,382 397,341 434,353 357,362 406,358 389,357 351,356 416,353 428,359 361,357 362,362 390,338 393,338 368,358 401,373 422,354 431,347 351,340 360,375 365,360 426,367 372,372 420,351 376,379 386,360 429,360 378,342 388,355 419,361 367,360 391,352 419,352 405,361 396,350 421,346 401,372 365,356 423,356 429,363 374,352 364,352 353,347 432,374 364,382 436,343 370,376 365,373 415,354 389,356 387,357 407,351 366,361 416,361 440,352 353,366 409,351 393,380 437,347 418,369 404,383 375,357 414,357 410,357 382,359 360,371 405,380 431,357 418,359 414,341 368,341 361,352 371,364 387,371 369,360 385,330 411,347 351,379 405,341 426,351 403,357 378,353 374,336 389,343 427,346 401,374 374,363 362,358 401,350 361,341 420,360 409,355 431,353 403,342 362,374 410,379 430,343 388,371 433,367 354,370 395,359 361,355 406,351 400,346 381,358 352,349 362,382 381,368 412,349 353,354 354,363 361,372 361,368 412,341 412,353 411,343 405,356 375,349 366,357 425,359 433,344 357,341 420,345 363,360 407,357 433,347 388,345 372,356 429,363 406,357 381,345 410,366 416,334 364,350 428,346 384,350 378,337 406,348 376,344 415,365 420,347 370,358 397,341 424,369 399,339 407,351 415,350" fill="none" stroke="none" marker-start="url(#m)" marker-mid="url(#m)" marker-end="url(#m)"/>
<rect x="445" y="321" width="100" height="67" fill="#ffffff" />
<polyline points="475,367 511,344 500,351 538,327 493,356 521,338 496,354 500,351 526,335 489,358 501,351 476,366 524,336 467,372 493,356 479,365 519,339 499,352 495,354 504,349 503,350 510,345 486,360 474,368 480,364 475,367 480,364 493,356 494,355 476,367 464,374 474,368 472,369 524,336 481,364 527,334 495,355 482,362 505,348 480,364 500,352 498,353 499,352 476,366 493,356 479,365 453,381 487,359 470,370 500,351 466,373 488,359 480,364 511,344 507,347 478,365 513,343 492,356 495,355 478,365 489,358 509,345 480,364 487,360 481,363 515,342 515,342 486,360 512,344 486,360 481,363 516,341 489,358 510,345 492,356 487,360 511,344 474,368 527,334 465,374 496,354 473,368 495,354 513,343 495,354 493,356 480,364 454,380 475,367 497,353 506,348 472,369 526,335 488,359 499,352 498,353 498,353 490,358 495,355 476,367 499,352 468,371 517,341 507,347 505,348 488,359 504,349 510,345 457,379 501,351 520,339 476,366 483,362 540,326 481,363 492,357 498,353 495,354 521,338 508,346 483,362 484,361 476,366 486,360 479,365 502,350 499,352 479,364 496,354 490,358 490,358 459,377 518,340 452,382 480,364 513,343 467,373 458,378 482,363 490,357 501,351 458,378 474,368 478,365 521,338 488,359 477,366 517,340 478,365 500,352 487,360 523,337 498,353 452,382 516,341 498,353 483,362 489,358 490,357 493,356 498,353 488,359 491,357 483,362 522,338 521,338 490,358 465,373 495,354 507,347 517,340 463,375 486,360 476,367 468,372 501,351 456,379 487,360 486,360 514,342 494,355 485,361 486,360 498,352 499,352 484,361 502,350 509,346 467,372 492,356 492,356 482,363 500,352 499,352 506,347 464,374 451,382 512,343 462,376 465,373 496,354 493,356 491,357 500,351 484,361 485,361 500,352 477,366 500,351 454,380 507,347 472,369 450,383 491,357 492,357 491,357 487,359 468,371 455,380 491,357 488,359 516,341 516,341 499,352 480,364 469,371 486,360 533,330 507,347 456,379 516,341 500,351 490,357 498,353 524,336 514,343 509,346 464,374 481,363 489,358 502,350 517,341 486,360 494,355 497,353 514,342 464,374 456,379 513,343 468,371 475,367 470,370 489,359 494,355 500,351 508,346 490,358 503,349 451,382 473,368 503,349 496,354 481,363 468,372 474,368 516,341 498,353 513,343 492,356 504,349 491,357 488,359 511,344 517,341 510,345 486,360 491,357 507,347 510,345 492,356 482,363 491,357 510,345 477,366 528,334 502,350 508,346 502,350 522,337 506,348 512,344 479,365 506,347 490,358 516,341 472,369 519,339 500,351 503,350" fill="none" stroke="none" marker-start="url(#m)" marker-mid="url(#m)" marker-end="url(#m)"/>
<rect x="545" y="321" width="100" height="67" fill="#95c8fd" />
<rect x="645" y="321" width="99" height="67" fill="#ffffff" />
<polyline points="686,367 673,344 670,351 665,327 672,356 668,338 672,354 679,351 671,335 662,358 656,351 678,366 679,336 731,372 701,356 670,365 699,339 707,352 716,354 710,349 676,350 671,345 706,360 716,368 702,364 673,367 711,364 712,356 703,355 681,367 679,374 676,368 685,369 696,336 681,364 678,334 667,355 680,362 665,348 720,364 668,352 661,353 696,352 671,366 700,356 710,365 698,381 705,359 722,370 664,351 687,373 684,359 714,364 658,344 658,347 727,365 673,343 706,356 658,355 692,365 714,358 665,345 667,364 670,360 694,363 702,342 689,342 664,360 700,344 689,360 665,363 658,341 679,358 683,345 674,356 670,360 693,344 694,368 663,334 674,374 664,354 673,368 685,354 653,343 657,354 671,356 681,364 675,380 674,367 673,353 687,348 713,369 689,335 701,359 710,352 677,353 706,353 677,358 696,355 675,367 703,352 691,371 702,341 703,347 663,348 663,359 676,349 668,345 739,379 699,351 697,339 720,366 690,362 666,326 681,363 685,357 714,353 658,354 677,338 692,346 716,362 694,361 676,366 699,360 698,365 693,350 696,352 693,364 709,354 698,358 677,358 727,377 674,340 733,382 678,364 701,343 708,373 679,378 703,363 677,357 682,351 737,378 677,368 700,365 656,338 681,359 703,366 679,340 670,365 713,352 710,360 659,337 685,353 677,382 679,341 712,353 667,362 699,358 686,357 659,356 700,353 714,359 667,357 670,362 672,338 674,338 672,358 707,373 706,354 705,347 650,340 677,375 671,360 720,367 684,372 701,351 692,379 686,360 715,360 668,342 684,355 709,361 673,360 684,352 702,352 700,361 686,350 697,346 706,372 669,356 708,356 718,363 672,352 666,352 655,347 730,374 684,382 704,343 685,376 680,373 701,354 685,356 685,357 694,351 673,361 708,361 714,352 666,366 695,351 706,380 708,347 715,369 717,383 676,357 702,357 701,357 683,359 675,371 715,380 714,357 707,359 689,341 661,341 663,352 678,364 695,371 674,360 664,330 692,347 672,379 684,341 705,351 696,357 676,353 661,336 675,343 701,346 708,374 680,363 668,358 688,350 657,341 709,360 698,355 710,353 684,342 678,374 718,379 700,343 696,371 724,367 669,370 691,359 666,355 693,351 685,346 681,358 655,349 683,382 689,368 695,349 659,354 665,363 675,372 673,368 688,341 698,353 689,343 696,356 671,349 670,357 712,359 703,344 654,341 697,345 670,360 698,357 706,347 677,345 674,356 718,363 698,357 673,345 707,366 684,334 664,350 702,346 678,350 665,337 690,348 668,344 710,365 699,347 673,358 679,341 720,369 679,339 693,351 697,350" fill="none" stroke="none" marker-start="url(#m)" marker-mid="url(#m)" marker-end="url(#m)"/>
<rect x="245" y="388" width="100" height="65" fill="#ffffff" />
<polyline points="315,426 279,434 290,436 252,439 297,434 269,437 294,434 290,430 264,435 301,441 289,444 314,431 266,430 323,398 297,416 311,435 271,418 291,413 295,407 286,411 287,432 280,435 304,413 316,407 310,416 315,434 310,410 297,409 296,415 314,429 326,430 316,432 318,426 266,420 309,429 263,431 295,438 308,430 285,439 310,405 290,437 292,441 291,420 314,435 297,417 311,411 337,419 303,414 320,404 290,439 324,425 302,427 310,408 279,443 283,443 312,401 277,434 298,413 295,443 312,422 301,409 281,439 310,437 303,436 309,421 275,416 275,424 304,439 278,417 304,424 309,439 274,443 301,430 280,427 298,433 303,436 279,421 316,421 263,440 325,433 294,439 317,434 295,426 277,446 295,444 297,435 310,429 336,432 315,433 293,433 284,425 318,409 264,424 302,416 291,411 292,431 292,413 300,431 295,420 314,433 291,415 322,422 273,416 283,416 285,440 302,440 286,432 280,437 333,393 289,418 270,419 314,405 307,424 250,438 309,429 298,427 292,408 295,443 269,431 282,422 307,407 306,421 314,432 304,418 311,418 288,421 291,420 311,422 294,412 300,418 300,431 331,401 272,433 338,397 310,431 277,417 323,412 332,430 308,415 300,431 289,428 332,394 316,431 312,417 269,444 302,429 313,415 273,430 312,436 290,409 303,411 267,442 292,426 338,431 274,430 292,410 307,438 301,418 300,426 297,443 292,417 302,408 299,438 307,435 268,434 269,433 300,434 325,413 295,414 283,414 273,448 327,432 304,435 314,405 322,427 289,417 334,422 303,426 304,408 276,437 296,427 305,411 304,434 292,427 291,416 306,417 288,426 281,419 323,413 298,436 298,412 308,406 290,434 291,438 284,445 326,398 339,427 278,414 328,427 325,430 294,416 297,426 299,427 290,421 306,434 305,412 290,408 313,438 290,420 336,413 283,412 318,408 340,407 299,432 298,416 299,417 303,428 322,433 335,408 299,408 302,413 274,424 274,441 291,440 310,430 321,420 304,433 257,439 283,422 334,434 274,427 290,414 300,420 292,432 266,441 276,432 281,416 326,412 309,429 301,437 288,424 273,444 304,411 296,418 293,411 276,427 326,431 334,406 277,417 322,420 315,402 320,436 301,423 296,438 290,422 282,426 300,429 287,445 339,428 317,424 287,420 294,442 309,439 322,432 316,434 274,425 292,418 277,424 298,419 286,435 299,435 302,410 279,415 273,446 280,419 304,436 299,418 283,414 280,431 298,433 308,406 299,418 280,434 313,412 262,427 288,439 282,416 288,431 268,439 284,423 278,437 311,411 284,418 300,434 274,430 318,405 271,430 290,421 287,419" fill="none" stroke="none" marker-start="url(#m)" marker-mid="url(#m)" marker-end="url(#m)"/>
<rect x="345" y="388" width="100" height="65" fill="#ffffff" />
<polyline points="378,426 384,434 370,436 391,439 370,434 383,437 372,434 384,430 392,435 354,441 351,444 369,431 405,430 436,398 413,416 360,435 434,418 427,413 438,407 437,411 381,432 380,435 415,413 420,407 404,416 361,434 417,410 431,409 417,415 373,429 363,430 365,432 376,426 434,420 376,429 405,431 364,438 375,430 367,439 430,405 368,437 356,441 410,420 360,435 412,417 416,411 382,419 414,414 425,404 363,439 375,425 384,427 422,408 361,443 357,443 439,401 385,434 420,413 351,443 388,422 429,409 370,439 357,437 364,436 393,421 435,416 412,424 355,439 427,417 389,424 353,439 363,443 377,430 399,427 373,433 363,436 416,421 389,421 379,440 358,433 360,439 361,434 390,426 354,446 350,444 369,435 375,429 354,432 363,433 374,433 402,425 414,409 423,424 409,416 432,411 381,431 425,413 375,431 407,420 364,433 420,415 382,422 436,416 427,416 364,440 355,440 383,432 375,437 438,393 416,418 432,419 427,405 388,424 395,438 375,429 387,427 438,408 352,443 398,431 412,422 428,407 396,421 365,432 404,418 398,418 408,421 410,420 390,422 428,412 406,418 375,431 423,401 390,433 426,397 371,431 431,417 403,412 361,430 407,415 375,431 390,428 438,394 366,431 400,417 364,444 379,429 403,415 398,430 358,436 438,409 421,411 369,442 393,426 356,431 397,430 434,410 357,438 406,418 389,426 351,443 416,417 428,408 361,438 362,435 390,434 393,433 368,434 401,413 422,414 431,414 351,448 360,432 365,435 426,405 372,427 420,417 376,422 386,426 429,408 378,437 388,427 419,411 367,434 391,427 419,416 405,417 396,426 421,419 401,413 365,436 423,412 429,406 374,434 364,438 353,445 432,398 364,427 436,414 370,427 365,430 415,416 389,426 387,427 407,421 366,434 416,412 440,408 353,438 409,420 393,413 437,412 418,408 404,407 375,432 414,416 410,417 382,428 360,433 405,408 431,408 418,413 414,424 368,441 361,440 371,430 387,420 369,433 385,439 411,422 351,434 405,427 426,414 403,420 378,432 374,441 389,432 427,416 401,412 374,429 362,437 401,424 361,444 420,411 409,418 431,411 403,427 362,431 410,406 430,417 388,420 433,402 354,436 395,423 361,438 406,422 400,426 381,429 352,445 362,428 381,424 412,420 353,442 354,439 361,432 361,434 412,425 412,418 411,424 405,419 375,435 366,435 425,410 433,415 357,446 420,419 363,436 407,418 433,414 388,431 372,433 429,406 406,418 381,434 410,412 416,427 364,439 428,416 384,431 378,439 406,423 376,437 415,411 420,418 370,434 397,430 424,405 399,430 407,421 415,419" fill="none" stroke="none" marker-start="url(#m)" marker-mid="url(#m)" marker-end="url(#m)"/>
<rect x="445" y="388" width="100" height="65" fill="#ffffff" />
<polyline points="475,426 511,434 500,436 538,439 493,434 521,437 496,434 500,430 526,435 489,441 501,444 476,431 524,430 467,398 493,416 479,435 519,418 499,413 495,407 504,411 503,432 510,435 486,413 474,407 480,416 475,434 480,410 493,409 494,415 476,429 464,430 474,432 472,426 524,420 481,429 527,431 495,438 482,430 505,439 480,405 500,437 498,441 499,420 476,435 493,417 479,411 453,419 487,414 470,404 500,439 466,425 488,427 480,408 511,443 507,443 478,401 513,434 492,413 495,443 478,422 489,409 509,439 480,437 487,436 481,421 515,416 515,424 486,439 512,417 486,424 481,439 516,443 489,430 510,427 492,433 487,436 511,421 474,421 527,440 465,433 496,439 473,434 495,426 513,446 495,444 493,435 480,429 454,432 475,433 497,433 506,425 472,409 526,424 488,416 499,411 498,431 498,413 490,431 495,420 476,433 499,415 468,422 517,416 507,416 505,440 488,440 504,432 510,437 457,393 501,418 520,419 476,405 483,424 540,438 481,429 492,427 498,408 495,443 521,431 508,422 483,407 484,421 476,432 486,418 479,418 502,421 499,420 479,422 496,412 490,418 490,431 459,401 518,433 452,397 480,431 513,417 467,412 458,430 482,415 490,431 501,428 458,394 474,431 478,417 521,444 488,429 477,415 517,430 478,436 500,409 487,411 523,442 498,426 452,431 516,430 498,410 483,438 489,418 490,426 493,443 498,417 488,408 491,438 483,435 522,434 521,433 490,434 465,413 495,414 507,414 517,448 463,432 486,435 476,405 468,427 501,417 456,422 487,426 486,408 514,437 494,427 485,411 486,434 498,427 499,416 484,417 502,426 509,419 467,413 492,436 492,412 482,406 500,434 499,438 506,445 464,398 451,427 512,414 462,427 465,430 496,416 493,426 491,427 500,421 484,434 485,412 500,408 477,438 500,420 454,413 507,412 472,408 450,407 491,432 492,416 491,417 487,428 468,433 455,408 491,408 488,413 516,424 516,441 499,440 480,430 469,420 486,433 533,439 507,422 456,434 516,427 500,414 490,420 498,432 524,441 514,432 509,416 464,412 481,429 489,437 502,424 517,444 486,411 494,418 497,411 514,427 464,431 456,406 513,417 468,420 475,402 470,436 489,423 494,438 500,422 508,426 490,429 503,445 451,428 473,424 503,420 496,442 481,439 468,432 474,434 516,425 498,418 513,424 492,419 504,435 491,435 488,410 511,415 517,446 510,419 486,436 491,418 507,414 510,431 492,433 482,406 491,418 510,434 477,412 528,427 502,439 508,416 502,431 522,439 506,423 512,437 479,411 506,418 490,434 516,430 472,405 519,430 500,421 503,419" fill="none" stroke="none" marker-start="url(#m)" marker-mid="url(#m)" marker-end="url(#m)"/>
<rect x="545" y="388" width="100" height="65" fill="#ffffff" />
<polyline points="575,426 611,434 600,436 638,439 593,434 621,437 596,434 600,430 626,435 589,441 601,444 576,431 624,430 567,398 593,416 579,435 619,418 599,413 595,407 604,411 603,432 610,435 586,413 574,407 580,416 575,434 580,410 593,409 594,415 576,429 564,430 574,432 572,426 624,420 581,429 627,431 595,438 582,430 605,439 580,405 600,437 598,441 599,420 576,435 593,417 579,411 553,419 587,414 570,404 600,439 566,425 588,427 580,408 611,443 607,443 578,401 613,434 592,413 595,443 578,422 589,409 609,439 580,437 587,436 581,421 615,416 615,424 586,439 612,417 586,424 581,439 616,443 589,430 610,427 592,433 587,436 611,421 574,421 627,440 565,433 596,439 573,434 595,426 613,446 595,444 593,435 580,429 554,432 575,433 597,433 606,425 572,409 626,424 588,416 599,411 598,431 598,413 590,431 595,420 576,433 599,415 568,422 617,416 607,416 605,440 588,440 604,432 610,437 557,393 601,418 620,419 576,405 583,424 640,438 581,429 592,427 598,408 595,443 621,431 608,422 583,407 584,421 576,432 586,418 579,418 602,421 599,420 579,422 596,412 590,418 590,431 559,401 618,433 552,397 580,431 613,417 567,412 558,430 582,415 590,431 601,428 558,394 574,431 578,417 621,444 588,429 577,415 617,430 578,436 600,409 587,411 623,442 598,426 552,431 616,430 598,410 583,438 589,418 590,426 593,443 598,417 588,408 591,438 583,435 622,434 621,433 590,434 565,413 595,414 607,414 617,448 563,432 586,435 576,405 568,427 601,417 556,422 587,426 586,408 614,437 594,427 585,411 586,434 598,427 599,416 584,417 602,426 609,419 567,413 592,436 592,412 582,406 600,434 599,438 606,445 564,398 551,427 612,414 562,427 565,430 596,416 593,426 591,427 600,421 584,434 585,412 600,408 577,438 600,420 554,413 607,412 572,408 550,407 591,432 592,416 591,417 587,428 568,433 555,408 591,408 588,413 616,424 616,441 599,440 580,430 569,420 586,433 633,439 607,422 556,434 616,427 600,414 590,420 598,432 624,441 614,432 609,416 564,412 581,429 589,437 602,424 617,444 586,411 594,418 597,411 614,427 564,431 556,406 613,417 568,420 575,402 570,436 589,423 594,438 600,422 608,426 590,429 603,445 551,428 573,424 603,420 596,442 581,439 568,432 574,434 616,425 598,418 613,424 592,419 604,435 591,435 588,410 611,415 617,446 610,419 586,436 591,418 607,414 610,431 592,433 582,406 591,418 610,434 577,412 628,427 602,439 608,416 602,431 622,439 606,423 612,437 579,411 606,418 590,434 616,430 572,405 619,430 600,421 603,419" fill="none" stroke="none" marker-start="url(#m)" marker-mid="url(#m)" marker-end="url(#m)"/>
<rect x="645" y="388" width="99" height="65" fill="#95c8fd" />
<text x="238.20" y="159.60" font-size="16" textLength="112.30" lengthAdjust="spacingAndGlyphs" fill="#000" clip-path="url(#d0)" stroke="#000" stroke-width="0.2">width (inches)</text>
<text x="313.60" y="227.20" font-size="16" textLength="167.30" lengthAdjust="spacingAndGlyphs" fill="#000" clip-path="url(#d1)" stroke="#000" stroke-width="0.2">centerLength (inches)</text>
<text x="418.00" y="293.00" font-size="16" textLength="159.40" lengthAdjust="spacingAndGlyphs" fill="#000" clip-path="url(#d2)" stroke="#000" stroke-width="0.2">brakeTorque (ft-lbs)</text>
<text x="556.30" y="359.60" font-size="16.5" textLength="78.00" lengthAdjust="spacingAndGlyphs" fill="#000" clip-path="url(#d3)" stroke="#000" stroke-width="0.25">heat (kW)</text>
<text x="629.40" y="424.90" font-size="15.5" textLength="128.80" lengthAdjust="spacingAndGlyphs" font-weight="bold" fill="#000" clip-path="url(#d4)" stroke="#000" stroke-width="0.1">life (driven miles)</text>
<rect x="245" y="121" width="1" height="333" fill="#000" />
<rect x="345" y="121" width="1" height="333" fill="#000" />
<rect x="445" y="121" width="1" height="333" fill="#000" />
<rect x="545" y="121" width="1" height="333" fill="#000" />
<rect x="645" y="121" width="1" height="333" fill="#000" />
<rect x="744" y="121" width="1" height="333" fill="#000" />
<rect x="245" y="121" width="500" height="1" fill="#000" />
<rect x="245" y="188" width="500" height="1" fill="#000" />
<rect x="245" y="254" width="500" height="1" fill="#000" />
<rect x="245" y="321" width="500" height="1" fill="#000" />
<rect x="245" y="388" width="500" height="1" fill="#000" />
<rect x="245" y="453" width="500" height="1" fill="#000" />
<rect x="350" y="117" width="1" height="4" fill="#5a5a5a" />
<rect x="361" y="119" width="1" height="2" fill="#5a5a5a" />
<rect x="372" y="119" width="1" height="2" fill="#5a5a5a" />
<rect x="384" y="119" width="1" height="2" fill="#5a5a5a" />
<rect x="395" y="117" width="1" height="4" fill="#5a5a5a" />
<rect x="406" y="119" width="1" height="2" fill="#5a5a5a" />
<rect x="417" y="119" width="1" height="2" fill="#5a5a5a" />
<rect x="429" y="119" width="1" height="2" fill="#5a5a5a" />
<rect x="440" y="117" width="1" height="4" fill="#5a5a5a" />
<text x="350.10" y="112.00" font-size="10.67" text-anchor="middle" fill="#000" clip-path="url(#t2)">2</text>
<text x="395.10" y="112.00" font-size="10.67" text-anchor="middle" fill="#000" clip-path="url(#t2)">3</text>
<text x="440.10" y="112.00" font-size="10.67" text-anchor="middle" fill="#000" clip-path="url(#t2)">4</text>
<rect x="549" y="117" width="1" height="4" fill="#5a5a5a" />
<rect x="558" y="119" width="1" height="2" fill="#5a5a5a" />
<rect x="567" y="119" width="1" height="2" fill="#5a5a5a" />
<rect x="576" y="119" width="1" height="2" fill="#5a5a5a" />
<rect x="585" y="117" width="1" height="4" fill="#5a5a5a" />
<rect x="594" y="119" width="1" height="2" fill="#5a5a5a" />
<rect x="602" y="119" width="1" height="2" fill="#5a5a5a" />
<rect x="611" y="119" width="1" height="2" fill="#5a5a5a" />
<rect x="620" y="117" width="1" height="4" fill="#5a5a5a" />
<rect x="629" y="119" width="1" height="2" fill="#5a5a5a" />
<rect x="638" y="119" width="1" height="2" fill="#5a5a5a" />
<text x="548.50" y="112.00" font-size="10.67" text-anchor="middle" fill="#000" clip-path="url(#t4)">63</text>
<text x="584.20" y="112.00" font-size="10.67" text-anchor="middle" fill="#000" clip-path="url(#t4)">63.2</text>
<text x="619.90" y="112.00" font-size="10.67" text-anchor="middle" fill="#000" clip-path="url(#t4)">63.4</text>
<text x="395.00" y="93.60" font-size="10.67" text-anchor="middle" fill="#000" >centerLength</text>
<text x="594.60" y="93.60" font-size="10.67" text-anchor="middle" fill="#000" >heat</text>
<rect x="246" y="454" width="1" height="4" fill="#5a5a5a" />
<rect x="259" y="454" width="1" height="2" fill="#5a5a5a" />
<rect x="271" y="454" width="1" height="2" fill="#5a5a5a" />
<rect x="284" y="454" width="1" height="2" fill="#5a5a5a" />
<rect x="297" y="454" width="1" height="4" fill="#5a5a5a" />
<rect x="310" y="454" width="1" height="2" fill="#5a5a5a" />
<rect x="322" y="454" width="1" height="2" fill="#5a5a5a" />
<rect x="335" y="454" width="1" height="2" fill="#5a5a5a" />
<text x="246.30" y="469.30" font-size="10.67" text-anchor="middle" fill="#000" clip-path="url(#b1)">0.15</text>
<text x="297.00" y="469.30" font-size="10.67" text-anchor="middle" fill="#000" clip-path="url(#b1)">0.2</text>
<rect x="449" y="454" width="1" height="4" fill="#5a5a5a" />
<rect x="472" y="454" width="1" height="2" fill="#5a5a5a" />
<rect x="495" y="454" width="1" height="2" fill="#5a5a5a" />
<rect x="518" y="454" width="1" height="2" fill="#5a5a5a" />
<rect x="541" y="454" width="1" height="4" fill="#5a5a5a" />
<text x="449.40" y="469.30" font-size="10.67" text-anchor="middle" fill="#000" clip-path="url(#b3)">605</text>
<text x="540.70" y="469.30" font-size="10.67" text-anchor="middle" fill="#000" clip-path="url(#b3)">610</text>
<rect x="651" y="454" width="1" height="2" fill="#5a5a5a" />
<rect x="662" y="454" width="1" height="2" fill="#5a5a5a" />
<rect x="673" y="454" width="1" height="4" fill="#5a5a5a" />
<rect x="684" y="454" width="1" height="2" fill="#5a5a5a" />
<rect x="695" y="454" width="1" height="2" fill="#5a5a5a" />
<rect x="707" y="454" width="1" height="2" fill="#5a5a5a" />
<rect x="718" y="454" width="1" height="4" fill="#5a5a5a" />
<rect x="729" y="454" width="1" height="2" fill="#5a5a5a" />
<rect x="740" y="454" width="1" height="2" fill="#5a5a5a" />
<text x="673.30" y="469.30" font-size="10.67" text-anchor="middle" fill="#000" clip-path="url(#b5)">20000</text>
<text x="717.80" y="469.30" font-size="10.67" text-anchor="middle" fill="#000" clip-path="url(#b5)">30000</text>
<text x="295.00" y="488.70" font-size="10.67" text-anchor="middle" fill="#000" >width</text>
<text x="494.70" y="488.70" font-size="10.67" text-anchor="middle" fill="#000" >brakeTorque</text>
<text x="694.30" y="488.70" font-size="10.67" text-anchor="middle" fill="#000" >life</text>
<rect x="241" y="249" width="4" height="1" fill="#5a5a5a" />
<rect x="243" y="242" width="2" height="1" fill="#5a5a5a" />
<rect x="243" y="235" width="2" height="1" fill="#5a5a5a" />
<rect x="243" y="228" width="2" height="1" fill="#5a5a5a" />
<rect x="241" y="221" width="4" height="1" fill="#5a5a5a" />
<rect x="243" y="214" width="2" height="1" fill="#5a5a5a" />
<rect x="243" y="207" width="2" height="1" fill="#5a5a5a" />
<rect x="243" y="200" width="2" height="1" fill="#5a5a5a" />
<rect x="241" y="193" width="4" height="1" fill="#5a5a5a" />
<text x="239.00" y="253.40" font-size="10.67" text-anchor="end" fill="#000" >2</text>
<text x="239.00" y="225.20" font-size="10.67" text-anchor="end" fill="#000" >3</text>
<text x="239.00" y="197.00" font-size="10.67" text-anchor="end" fill="#000" >4</text>
<rect x="241" y="383" width="4" height="1" fill="#5a5a5a" />
<rect x="243" y="377" width="2" height="1" fill="#5a5a5a" />
<rect x="243" y="372" width="2" height="1" fill="#5a5a5a" />
<rect x="243" y="366" width="2" height="1" fill="#5a5a5a" />
<rect x="241" y="361" width="4" height="1" fill="#5a5a5a" />
<rect x="243" y="355" width="2" height="1" fill="#5a5a5a" />
<rect x="243" y="350" width="2" height="1" fill="#5a5a5a" />
<rect x="243" y="344" width="2" height="1" fill="#5a5a5a" />
<rect x="241" y="339" width="4" height="1" fill="#5a5a5a" />
<rect x="243" y="333" width="2" height="1" fill="#5a5a5a" />
<rect x="243" y="328" width="2" height="1" fill="#5a5a5a" />
<text x="239.00" y="387.20" font-size="10.67" text-anchor="end" fill="#000" >63</text>
<text x="239.00" y="365.20" font-size="10.67" text-anchor="end" fill="#000" >63.2</text>
<text x="239.00" y="343.20" font-size="10.67" text-anchor="end" fill="#000" >63.4</text>
<text transform="translate(176 221) rotate(-90)" font-size="10.67" text-anchor="middle">centerLength</text>
<text transform="translate(176 354.8) rotate(-90)" font-size="10.67" text-anchor="middle">heat</text>
<rect x="745" y="186" width="4" height="1" fill="#5a5a5a" />
<rect x="745" y="177" width="2" height="1" fill="#5a5a5a" />
<rect x="745" y="169" width="2" height="1" fill="#5a5a5a" />
<rect x="745" y="161" width="2" height="1" fill="#5a5a5a" />
<rect x="745" y="153" width="4" height="1" fill="#5a5a5a" />
<rect x="745" y="145" width="2" height="1" fill="#5a5a5a" />
<rect x="745" y="137" width="2" height="1" fill="#5a5a5a" />
<rect x="745" y="129" width="2" height="1" fill="#5a5a5a" />
<text x="750.30" y="189.80" font-size="10.67" fill="#000" clip-path="url(#r1)">0.15</text>
<text x="750.30" y="157.20" font-size="10.67" fill="#000" clip-path="url(#r1)">0.2</text>
<rect x="745" y="259" width="4" height="1" fill="#5a5a5a" />
<rect x="745" y="264" width="2" height="1" fill="#5a5a5a" />
<rect x="745" y="270" width="2" height="1" fill="#5a5a5a" />
<rect x="745" y="276" width="2" height="1" fill="#5a5a5a" />
<rect x="745" y="282" width="4" height="1" fill="#5a5a5a" />
<rect x="745" y="288" width="2" height="1" fill="#5a5a5a" />
<rect x="745" y="293" width="2" height="1" fill="#5a5a5a" />
<rect x="745" y="299" width="2" height="1" fill="#5a5a5a" />
<rect x="745" y="305" width="4" height="1" fill="#5a5a5a" />
<rect x="745" y="311" width="2" height="1" fill="#5a5a5a" />
<rect x="745" y="316" width="2" height="1" fill="#5a5a5a" />
<text x="750.30" y="262.90" font-size="10.67" fill="#000" clip-path="url(#r3)">610</text>
<text x="750.30" y="285.95" font-size="10.67" fill="#000" clip-path="url(#r3)">608</text>
<text x="750.30" y="309.00" font-size="10.67" fill="#000" clip-path="url(#r3)">606</text>
<rect x="745" y="390" width="4" height="1" fill="#5a5a5a" />
<rect x="745" y="394" width="2" height="1" fill="#5a5a5a" />
<rect x="745" y="397" width="2" height="1" fill="#5a5a5a" />
<rect x="745" y="401" width="2" height="1" fill="#5a5a5a" />
<rect x="745" y="405" width="4" height="1" fill="#5a5a5a" />
<rect x="745" y="409" width="2" height="1" fill="#5a5a5a" />
<rect x="745" y="412" width="2" height="1" fill="#5a5a5a" />
<rect x="745" y="416" width="2" height="1" fill="#5a5a5a" />
<rect x="745" y="420" width="4" height="1" fill="#5a5a5a" />
<rect x="745" y="423" width="2" height="1" fill="#5a5a5a" />
<rect x="745" y="427" width="2" height="1" fill="#5a5a5a" />
<rect x="745" y="431" width="2" height="1" fill="#5a5a5a" />
<rect x="745" y="435" width="4" height="1" fill="#5a5a5a" />
<rect x="745" y="438" width="2" height="1" fill="#5a5a5a" />
<rect x="745" y="442" width="2" height="1" fill="#5a5a5a" />
<rect x="745" y="446" width="2" height="1" fill="#5a5a5a" />
<rect x="745" y="450" width="4" height="1" fill="#5a5a5a" />
<text x="750.30" y="394.10" font-size="10.67" fill="#000" clip-path="url(#r5)">35000</text>
<text x="750.30" y="409.00" font-size="10.67" fill="#000" clip-path="url(#r5)">30000</text>
<text x="750.30" y="423.90" font-size="10.67" fill="#000" clip-path="url(#r5)">25000</text>
<text x="750.30" y="438.80" font-size="10.67" fill="#000" clip-path="url(#r5)">20000</text>
<text x="750.30" y="453.70" font-size="10.67" fill="#000" clip-path="url(#r5)">15000</text>
<text transform="translate(812.5 154.5) rotate(90)" font-size="10.67" text-anchor="middle">width</text>
<text transform="translate(812.5 287.5) rotate(90)" font-size="10.67" text-anchor="middle">brakeTorque</text>
<text transform="translate(812.5 420.5) rotate(90)" font-size="10.67" text-anchor="middle">life</text>
<rect x="136" y="534" width="2" height="102" fill="#b2b2b2" />
<rect x="21" y="634" width="117" height="2" fill="#b2b2b2" />
<rect x="18" y="531" width="118" height="103" fill="#000000" />
<rect x="19" y="532" width="116" height="101" fill="#e6f2fd" />
<rect x="19" y="532" width="116" height="14" fill="url(#g25)" />
<text x="22.60" y="543.20" font-size="11.4" textLength="80.40" lengthAdjust="spacingAndGlyphs" fill="#ffffff" >5: Scatter Matrix</text>
<g clip-path="url(#c5)">
<rect x="43.5" y="557" width="28.8" height="19.6" fill="#b9f2cb" />
<rect x="72.3" y="557" width="29.1" height="19.6" fill="#f4f9fe" />
<polyline points="83.5,569.9 85.7,574.8 83.2,571.7 83.6,567.8 74.8,565.7 79.3,563.4 98.6,561.7 76.6,563.8 96.1,567.5 98.9,568.5 82.5,569.7 93.9,563.0 76.9,563.1 97.1,566.5 80.3,563.3 78.1,563.0 98.0,572.3 89.7,572.8 80.9,564.5 97.0,564.0 75.6,567.3 76.6,563.3 92.7,563.9 92.3,565.4 77.4,567.7 83.6,565.5 76.8,569.9 99.3,563.7 94.1,566.3 84.8,563.6 79.6,569.5 77.8,565.4 98.2,570.6 75.3,565.2 85.1,565.1 77.5,570.8 87.9,569.6 77.7,565.3 85.2,562.9 76.2,561.3 76.9,562.8 75.0,570.2 79.2,566.4 75.1,559.3 80.8,567.1 92.4,562.6 90.8,565.5 82.7,567.3 81.0,565.8 77.8,563.3 83.0,561.9 96.1,569.0 75.2,565.5 81.1,569.7 92.9,567.9 96.1,563.4 86.8,574.8 84.5,566.2 74.2,566.8 91.7,569.3 86.9,564.8 89.2,565.1 90.5,568.2 85.4,563.9 89.9,565.8 94.9,560.1 95.9,558.9 97.2,570.3 77.1,560.0 81.0,566.0 99.1,560.0 88.4,563.7 82.2,565.5 87.6,571.0 99.1,567.7 79.2,572.0 75.5,558.9 97.9,567.3 90.1,565.8 74.1,566.5 96.4,565.5 77.3,564.7 86.1,571.7 88.6,561.3 97.3,569.0 76.7,560.9 95.8,563.3 93.9,568.0 84.3,565.3 81.8,570.4 93.6,564.9 85.7,567.4 89.6,564.9 94.2,569.4 78.2,566.3 96.6,564.3 77.9,567.5 97.6,561.1 98.7,570.1 78.1,561.3 85.2,566.5 90.4,567.8 93.0,565.0 74.7,563.5 86.2,559.3 93.3,562.6 81.0,566.1 91.2,566.0 76.8,561.9 97.3,566.2 92.2,570.8 76.9,567.6 84.5,561.9 84.0,573.9 74.2,559.5 95.7,567.8 82.0,567.4 85.1,570.3 88.6,561.0 77.2,565.8 77.1,570.9 90.9,566.7 89.1,570.4 91.1,559.6 84.6,561.9 74.9,562.2 77.0,566.7 88.3,569.2 74.2,568.3 82.8,562.8 74.7,567.0 76.9,561.8 91.6,570.7 91.4,570.1 81.1,568.6 95.3,565.5 75.7,570.9 77.5,565.2 97.7,569.1 80.0,566.3 90.1,566.1 91.1,563.5 77.9,568.1 83.5,568.1 90.0,568.8 92.7,563.8 79.5,565.9 95.1,562.6 90.2,567.9" fill="none" stroke="none" marker-start="url(#mm)" marker-mid="url(#mm)" marker-end="url(#mm)"/>
<rect x="101.4" y="557" width="28.9" height="19.6" fill="#f4f9fe" />
<polyline points="120.3,569.9 128.1,574.8 123.1,571.7 117.1,567.8 113.8,565.7 110.3,563.4 107.7,561.7 111.0,563.8 116.7,567.5 118.2,568.5 120.1,569.7 109.7,563.0 109.8,563.1 115.1,566.5 110.1,563.3 109.6,563.0 124.1,572.3 124.9,572.8 112.0,564.5 111.2,564.0 116.3,567.3 110.2,563.3 111.0,563.9 113.3,565.4 117.0,567.7 113.6,565.5 120.3,569.9 110.7,563.7 114.8,566.3 110.7,563.6 119.8,569.5 113.3,565.4 121.4,570.6 113.0,565.2 112.9,565.1 121.7,570.8 119.9,569.6 113.2,565.3 109.6,562.9 107.0,561.3 109.4,562.8 120.8,570.2 115.0,566.4 103.9,559.3 116.1,567.1 109.1,562.6 113.5,565.5 116.4,567.3 114.1,565.8 110.1,563.3 107.9,561.9 119.0,569.0 113.5,565.5 120.0,569.7 117.2,567.9 110.2,563.4 128.5,574.8 114.7,566.2 115.6,566.8 119.5,569.3 112.4,564.8 112.9,565.1 117.7,568.2 111.1,563.9 114.1,565.8 105.2,560.1 103.3,558.9 121.0,570.3 105.0,560.0 114.3,566.0 105.1,560.0 110.7,563.7 113.5,565.5 122.1,571.0 117.0,567.7 123.6,572.0 103.3,558.9 116.4,567.3 114.0,565.8 115.1,566.5 113.6,565.5 112.3,564.7 123.1,571.7 107.1,561.3 119.0,569.0 106.4,560.9 110.1,563.3 117.4,568.0 113.3,565.3 121.2,570.4 112.6,564.9 116.5,567.4 112.6,564.9 119.5,569.4 114.8,566.3 111.7,564.3 116.7,567.5 106.7,561.1 120.6,570.1 107.1,561.3 115.1,566.5 117.1,567.8 112.7,565.0 110.4,563.5 103.9,559.3 109.0,562.6 114.5,566.1 114.4,566.0 108.0,561.9 114.6,566.2 121.8,570.8 116.9,567.6 108.0,561.9 126.6,573.9 104.2,559.5 117.1,567.8 116.4,567.4 121.1,570.3 106.6,561.0 114.0,565.8 121.8,570.9 115.4,566.7 121.2,570.4 104.4,559.6 108.0,561.9 108.5,562.2 115.3,566.7 119.3,569.2 118.0,568.3 109.4,562.8 115.9,567.0 107.8,561.8 121.7,570.7 120.7,570.1 118.3,568.6 113.6,565.5 121.9,570.9 113.0,565.2 119.1,569.1 114.8,566.3 114.4,566.1 110.5,563.5 117.6,568.1 117.5,568.1 118.7,568.8 110.9,563.8 114.1,565.9 109.0,562.6 117.2,567.9" fill="none" stroke="none" marker-start="url(#mm)" marker-mid="url(#mm)" marker-end="url(#mm)"/>
<rect x="43.5" y="576.6" width="28.8" height="19.6" fill="#f4f9fe" />
<polyline points="53.2,588.5 45.5,587.0 50.4,588.7 56.4,588.4 59.7,593.9 63.3,591.1 65.9,578.9 62.6,592.8 56.9,580.4 55.3,578.7 53.5,589.1 63.9,581.9 63.8,592.6 58.5,579.8 63.4,590.5 63.9,591.9 49.5,579.3 48.6,584.5 61.5,590.1 62.4,579.9 57.2,593.5 63.3,592.8 62.5,582.6 60.2,582.9 56.5,592.3 60.0,588.4 53.2,592.7 62.9,578.4 58.8,581.7 62.9,587.6 53.8,590.9 60.2,592.1 52.2,579.1 60.5,593.7 60.6,587.5 51.8,592.2 53.6,585.6 60.3,592.1 64.0,587.4 66.6,593.1 64.2,592.7 52.7,593.9 58.6,591.1 69.7,593.8 57.4,590.2 64.5,582.8 60.0,583.8 57.1,589.0 59.5,590.0 63.4,592.1 65.6,588.8 54.6,580.4 60.0,593.7 53.5,590.0 56.3,582.5 63.3,580.5 45.3,586.4 58.9,587.8 57.9,594.3 54.1,583.2 61.1,586.3 60.6,584.8 55.8,584.0 62.5,587.2 59.5,584.4 68.4,581.2 70.3,580.6 52.6,579.8 68.6,592.5 59.3,590.0 68.5,578.6 62.8,585.4 60.0,589.2 51.5,585.9 56.6,578.5 50.0,591.2 70.3,593.5 57.1,579.3 59.6,584.3 58.4,594.4 60.0,580.3 61.3,592.4 50.5,586.8 66.5,585.2 54.6,579.7 67.2,592.7 63.4,580.6 56.2,581.9 60.2,587.9 52.3,589.5 60.9,582.1 57.0,587.0 61.0,584.6 54.0,581.7 58.8,591.8 61.8,580.2 56.8,592.0 66.8,579.5 52.9,578.8 66.4,591.8 58.4,587.4 56.4,584.1 60.8,582.5 63.1,594.0 69.7,586.7 64.5,582.3 59.0,590.0 59.2,583.6 65.6,592.7 59.0,579.7 51.8,583.0 56.7,592.7 65.5,587.8 47.0,588.1 69.3,594.3 56.5,580.7 57.1,589.4 52.5,587.4 67.0,585.2 59.6,592.4 51.7,592.5 58.1,583.7 52.3,584.9 69.1,583.6 65.6,587.7 65.0,593.9 58.2,592.5 54.2,585.4 55.6,594.3 64.2,588.9 57.7,594.0 65.7,592.6 51.9,583.3 52.8,583.4 55.3,590.0 60.0,581.0 51.7,593.4 60.5,592.3 54.5,579.5 58.7,590.7 59.1,584.3 63.1,583.6 55.9,592.0 56.0,588.4 54.9,584.3 62.6,582.6 59.4,591.0 64.5,581.1 56.3,584.2" fill="none" stroke="none" marker-start="url(#mm)" marker-mid="url(#mm)" marker-end="url(#mm)"/>
<rect x="72.3" y="576.6" width="29.1" height="19.6" fill="#b9f2cb" />
<rect x="101.4" y="576.6" width="28.9" height="19.6" fill="#f4f9fe" />
<polyline points="120.3,588.5 128.1,587.0 123.1,588.7 117.1,588.4 113.8,593.9 110.3,591.1 107.7,578.9 111.0,592.8 116.7,580.4 118.2,578.7 120.1,589.1 109.7,581.9 109.8,592.6 115.1,579.8 110.1,590.5 109.6,591.9 124.1,579.3 124.9,584.5 112.0,590.1 111.2,579.9 116.3,593.5 110.2,592.8 111.0,582.6 113.3,582.9 117.0,592.3 113.6,588.4 120.3,592.7 110.7,578.4 114.8,581.7 110.7,587.6 119.8,590.9 113.3,592.1 121.4,579.1 113.0,593.7 112.9,587.5 121.7,592.2 119.9,585.6 113.2,592.1 109.6,587.4 107.0,593.1 109.4,592.7 120.8,593.9 115.0,591.1 103.9,593.8 116.1,590.2 109.1,582.8 113.5,583.8 116.4,589.0 114.1,590.0 110.1,592.1 107.9,588.8 119.0,580.4 113.5,593.7 120.0,590.0 117.2,582.5 110.2,580.5 128.5,586.4 114.7,587.8 115.6,594.3 119.5,583.2 112.4,586.3 112.9,584.8 117.7,584.0 111.1,587.2 114.1,584.4 105.2,581.2 103.3,580.6 121.0,579.8 105.0,592.5 114.3,590.0 105.1,578.6 110.7,585.4 113.5,589.2 122.1,585.9 117.0,578.5 123.6,591.2 103.3,593.5 116.4,579.3 114.0,584.3 115.1,594.4 113.6,580.3 112.3,592.4 123.1,586.8 107.1,585.2 119.0,579.7 106.4,592.7 110.1,580.6 117.4,581.9 113.3,587.9 121.2,589.5 112.6,582.1 116.5,587.0 112.6,584.6 119.5,581.7 114.8,591.8 111.7,580.2 116.7,592.0 106.7,579.5 120.6,578.8 107.1,591.8 115.1,587.4 117.1,584.1 112.7,582.5 110.4,594.0 103.9,586.7 109.0,582.3 114.5,590.0 114.4,583.6 108.0,592.7 114.6,579.7 121.8,583.0 116.9,592.7 108.0,587.8 126.6,588.1 104.2,594.3 117.1,580.7 116.4,589.4 121.1,587.4 106.6,585.2 114.0,592.4 121.8,592.5 115.4,583.7 121.2,584.9 104.4,583.6 108.0,587.7 108.5,593.9 115.3,592.5 119.3,585.4 118.0,594.3 109.4,588.9 115.9,594.0 107.8,592.6 121.7,583.3 120.7,583.4 118.3,590.0 113.6,581.0 121.9,593.4 113.0,592.3 119.1,579.5 114.8,590.7 114.4,584.3 110.5,583.6 117.6,592.0 117.5,588.4 118.7,584.3 110.9,582.6 114.1,591.0 109.0,581.1 117.2,584.2" fill="none" stroke="none" marker-start="url(#mm)" marker-mid="url(#mm)" marker-end="url(#mm)"/>
<rect x="43.5" y="596.2" width="28.8" height="19.6" fill="#f4f9fe" />
<polyline points="53.2,602.9 45.5,598.0 50.4,601.1 56.4,604.9 59.7,607.1 63.3,609.3 65.9,611.0 62.6,608.9 56.9,605.2 55.3,604.2 53.5,603.0 63.9,609.7 63.8,609.7 58.5,606.2 63.4,609.4 63.9,609.8 49.5,600.5 48.6,599.9 61.5,608.2 62.4,608.8 57.2,605.4 63.3,609.4 62.5,608.9 60.2,607.4 56.5,605.0 60.0,607.2 53.2,602.9 62.9,609.1 58.8,606.4 62.9,609.1 53.8,603.2 60.2,607.4 52.2,602.2 60.5,607.6 60.6,607.6 51.8,602.0 53.6,603.1 60.3,607.4 64.0,609.8 66.6,611.5 64.2,609.9 52.7,602.5 58.6,606.3 69.7,613.5 57.4,605.6 64.5,610.1 60.0,607.2 57.1,605.4 59.5,606.9 63.4,609.5 65.6,610.9 54.6,603.7 60.0,607.2 53.5,603.1 56.3,604.9 63.3,609.4 45.3,598.0 58.9,606.5 57.9,605.9 54.1,603.4 61.1,608.0 60.6,607.6 55.8,604.6 62.5,608.8 59.5,606.9 68.4,612.7 70.3,613.9 52.6,602.5 68.6,612.8 59.3,606.8 68.5,612.7 62.8,609.1 60.0,607.3 51.5,601.7 56.6,605.0 50.0,600.8 70.3,613.9 57.1,605.4 59.6,607.0 58.4,606.2 60.0,607.2 61.3,608.1 50.5,601.1 66.5,611.4 54.6,603.7 67.2,611.9 63.4,609.5 56.2,604.8 60.2,607.4 52.3,602.3 60.9,607.8 57.0,605.3 61.0,607.9 54.0,603.4 58.8,606.4 61.8,608.4 56.8,605.2 66.8,611.6 52.9,602.7 66.4,611.4 58.4,606.2 56.4,604.9 60.8,607.8 63.1,609.2 69.7,613.5 64.5,610.1 59.0,606.6 59.2,606.7 65.6,610.8 59.0,606.6 51.8,601.9 56.7,605.1 65.5,610.8 47.0,598.9 69.3,613.2 56.5,605.0 57.1,605.4 52.5,602.4 67.0,611.7 59.6,607.0 51.7,601.9 58.1,606.0 52.3,602.3 69.1,613.1 65.6,610.8 65.0,610.5 58.2,606.1 54.2,603.5 55.6,604.4 64.2,609.9 57.7,605.7 65.7,610.9 51.9,602.0 52.8,602.6 55.3,604.2 60.0,607.2 51.7,601.9 60.5,607.6 54.5,603.7 58.7,606.4 59.1,606.7 63.1,609.2 55.9,604.6 56.0,604.7 54.9,603.9 62.6,608.9 59.4,606.9 64.5,610.1 56.3,604.9" fill="none" stroke="none" marker-start="url(#mm)" marker-mid="url(#mm)" marker-end="url(#mm)"/>
<rect x="72.3" y="596.2" width="29.1" height="19.6" fill="#f4f9fe" />
<polyline points="83.5,602.9 85.7,598.0 83.2,601.1 83.6,604.9 74.8,607.1 79.3,609.3 98.6,611.0 76.6,608.9 96.1,605.2 98.9,604.2 82.5,603.0 93.9,609.7 76.9,609.7 97.1,606.2 80.3,609.4 78.1,609.8 98.0,600.5 89.7,599.9 80.9,608.2 97.0,608.8 75.6,605.4 76.6,609.4 92.7,608.9 92.3,607.4 77.4,605.0 83.6,607.2 76.8,602.9 99.3,609.1 94.1,606.4 84.8,609.1 79.6,603.2 77.8,607.4 98.2,602.2 75.3,607.6 85.1,607.6 77.5,602.0 87.9,603.1 77.7,607.4 85.2,609.8 76.2,611.5 76.9,609.9 75.0,602.5 79.2,606.3 75.1,613.5 80.8,605.6 92.4,610.1 90.8,607.2 82.7,605.4 81.0,606.9 77.8,609.5 83.0,610.9 96.1,603.7 75.2,607.2 81.1,603.1 92.9,604.9 96.1,609.4 86.8,598.0 84.5,606.5 74.2,605.9 91.7,603.4 86.9,608.0 89.2,607.6 90.5,604.6 85.4,608.8 89.9,606.9 94.9,612.7 95.9,613.9 97.2,602.5 77.1,612.8 81.0,606.8 99.1,612.7 88.4,609.1 82.2,607.3 87.6,601.7 99.1,605.0 79.2,600.8 75.5,613.9 97.9,605.4 90.1,607.0 74.1,606.2 96.4,607.2 77.3,608.1 86.1,601.1 88.6,611.4 97.3,603.7 76.7,611.9 95.8,609.5 93.9,604.8 84.3,607.4 81.8,602.3 93.6,607.8 85.7,605.3 89.6,607.9 94.2,603.4 78.2,606.4 96.6,608.4 77.9,605.2 97.6,611.6 98.7,602.7 78.1,611.4 85.2,606.2 90.4,604.9 93.0,607.8 74.7,609.2 86.2,613.5 93.3,610.1 81.0,606.6 91.2,606.7 76.8,610.8 97.3,606.6 92.2,601.9 76.9,605.1 84.5,610.8 84.0,598.9 74.2,613.2 95.7,605.0 82.0,605.4 85.1,602.4 88.6,611.7 77.2,607.0 77.1,601.9 90.9,606.0 89.1,602.3 91.1,613.1 84.6,610.8 74.9,610.5 77.0,606.1 88.3,603.5 74.2,604.4 82.8,609.9 74.7,605.7 76.9,610.9 91.6,602.0 91.4,602.6 81.1,604.2 95.3,607.2 75.7,601.9 77.5,607.6 97.7,603.7 80.0,606.4 90.1,606.7 91.1,609.2 77.9,604.6 83.5,604.7 90.0,603.9 92.7,608.9 79.5,606.9 95.1,610.1 90.2,604.9" fill="none" stroke="none" marker-start="url(#mm)" marker-mid="url(#mm)" marker-end="url(#mm)"/>
<rect x="101.4" y="596.2" width="28.9" height="19.6" fill="#86bdf7" />
<rect x="43.5" y="615.8" width="28.8" height="19.6" fill="#f4f9fe" />
<polyline points="53.2,622.6 45.5,617.6 50.4,620.7 56.4,624.6 59.7,626.7 63.3,629.0 65.9,630.7 62.6,628.6 56.9,624.9 55.3,623.9 53.5,622.7 63.9,629.4 63.8,629.3 58.5,625.9 63.4,629.1 63.9,629.4 49.5,620.1 48.6,619.6 61.5,627.9 62.4,628.4 57.2,625.1 63.3,629.1 62.5,628.5 60.2,627.0 56.5,624.7 60.0,626.9 53.2,622.6 62.9,628.8 58.8,626.1 62.9,628.8 53.8,622.9 60.2,627.1 52.2,621.9 60.5,627.2 60.6,627.3 51.8,621.6 53.6,622.8 60.3,627.1 64.0,629.5 66.6,631.2 64.2,629.6 52.7,622.2 58.6,626.0 69.7,633.1 57.4,625.3 64.5,629.8 60.0,626.9 57.1,625.1 59.5,626.6 63.4,629.1 65.6,630.5 54.6,623.4 60.0,626.9 53.5,622.7 56.3,624.5 63.3,629.0 45.3,617.6 58.9,626.2 57.9,625.6 54.1,623.1 61.1,627.6 60.6,627.3 55.8,624.2 62.5,628.5 59.5,626.6 68.4,632.3 70.3,633.5 52.6,622.1 68.6,632.4 59.3,626.5 68.5,632.4 62.8,628.7 60.0,626.9 51.5,621.4 56.6,624.7 50.0,620.5 70.3,633.5 57.1,625.1 59.6,626.6 58.4,625.9 60.0,626.9 61.3,627.7 50.5,620.8 66.5,631.1 54.6,623.4 67.2,631.6 63.4,629.1 56.2,624.5 60.2,627.1 52.3,622.0 60.9,627.5 57.0,625.0 61.0,627.5 54.0,623.0 58.8,626.1 61.8,628.1 56.8,624.9 66.8,631.3 52.9,622.3 66.4,631.1 58.4,625.9 56.4,624.6 60.8,627.5 63.1,628.9 69.7,633.1 64.5,629.8 59.0,626.3 59.2,626.4 65.6,630.5 59.0,626.3 51.8,621.6 56.7,624.8 65.5,630.5 47.0,618.5 69.3,632.9 56.5,624.6 57.1,625.1 52.5,622.1 67.0,631.4 59.6,626.6 51.7,621.6 58.1,625.7 52.3,622.0 69.1,632.8 65.6,630.5 65.0,630.2 58.2,625.8 54.2,623.2 55.6,624.1 64.2,629.6 57.7,625.4 65.7,630.6 51.9,621.7 52.8,622.3 55.3,623.9 60.0,626.9 51.7,621.5 60.5,627.3 54.5,623.3 58.7,626.1 59.1,626.4 63.1,628.9 55.9,624.3 56.0,624.3 54.9,623.6 62.6,628.6 59.4,626.6 64.5,629.8 56.3,624.6" fill="none" stroke="none" marker-start="url(#mm)" marker-mid="url(#mm)" marker-end="url(#mm)"/>
<rect x="72.3" y="615.8" width="29.1" height="19.6" fill="#f4f9fe" />
<polyline points="83.5,622.6 85.7,617.6 83.2,620.7 83.6,624.6 74.8,626.7 79.3,629.0 98.6,630.7 76.6,628.6 96.1,624.9 98.9,623.9 82.5,622.7 93.9,629.4 76.9,629.3 97.1,625.9 80.3,629.1 78.1,629.4 98.0,620.1 89.7,619.6 80.9,627.9 97.0,628.4 75.6,625.1 76.6,629.1 92.7,628.5 92.3,627.0 77.4,624.7 83.6,626.9 76.8,622.6 99.3,628.8 94.1,626.1 84.8,628.8 79.6,622.9 77.8,627.1 98.2,621.9 75.3,627.2 85.1,627.3 77.5,621.6 87.9,622.8 77.7,627.1 85.2,629.5 76.2,631.2 76.9,629.6 75.0,622.2 79.2,626.0 75.1,633.1 80.8,625.3 92.4,629.8 90.8,626.9 82.7,625.1 81.0,626.6 77.8,629.1 83.0,630.5 96.1,623.4 75.2,626.9 81.1,622.7 92.9,624.5 96.1,629.0 86.8,617.6 84.5,626.2 74.2,625.6 91.7,623.1 86.9,627.6 89.2,627.3 90.5,624.2 85.4,628.5 89.9,626.6 94.9,632.3 95.9,633.5 97.2,622.1 77.1,632.4 81.0,626.5 99.1,632.4 88.4,628.7 82.2,626.9 87.6,621.4 99.1,624.7 79.2,620.5 75.5,633.5 97.9,625.1 90.1,626.6 74.1,625.9 96.4,626.9 77.3,627.7 86.1,620.8 88.6,631.1 97.3,623.4 76.7,631.6 95.8,629.1 93.9,624.5 84.3,627.1 81.8,622.0 93.6,627.5 85.7,625.0 89.6,627.5 94.2,623.0 78.2,626.1 96.6,628.1 77.9,624.9 97.6,631.3 98.7,622.3 78.1,631.1 85.2,625.9 90.4,624.6 93.0,627.5 74.7,628.9 86.2,633.1 93.3,629.8 81.0,626.3 91.2,626.4 76.8,630.5 97.3,626.3 92.2,621.6 76.9,624.8 84.5,630.5 84.0,618.5 74.2,632.9 95.7,624.6 82.0,625.1 85.1,622.1 88.6,631.4 77.2,626.6 77.1,621.6 90.9,625.7 89.1,622.0 91.1,632.8 84.6,630.5 74.9,630.2 77.0,625.8 88.3,623.2 74.2,624.1 82.8,629.6 74.7,625.4 76.9,630.6 91.6,621.7 91.4,622.3 81.1,623.9 95.3,626.9 75.7,621.5 77.5,627.3 97.7,623.3 80.0,626.1 90.1,626.4 91.1,628.9 77.9,624.3 83.5,624.3 90.0,623.6 92.7,628.6 79.5,626.6 95.1,629.8 90.2,624.6" fill="none" stroke="none" marker-start="url(#mm)" marker-mid="url(#mm)" marker-end="url(#mm)"/>
<rect x="101.4" y="615.8" width="28.9" height="19.6" fill="#f4f9fe" />
<polyline points="120.3,622.6 128.1,617.6 123.1,620.7 117.1,624.6 113.8,626.7 110.3,629.0 107.7,630.7 111.0,628.6 116.7,624.9 118.2,623.9 120.1,622.7 109.7,629.4 109.8,629.3 115.1,625.9 110.1,629.1 109.6,629.4 124.1,620.1 124.9,619.6 112.0,627.9 111.2,628.4 116.3,625.1 110.2,629.1 111.0,628.5 113.3,627.0 117.0,624.7 113.6,626.9 120.3,622.6 110.7,628.8 114.8,626.1 110.7,628.8 119.8,622.9 113.3,627.1 121.4,621.9 113.0,627.2 112.9,627.3 121.7,621.6 119.9,622.8 113.2,627.1 109.6,629.5 107.0,631.2 109.4,629.6 120.8,622.2 115.0,626.0 103.9,633.1 116.1,625.3 109.1,629.8 113.5,626.9 116.4,625.1 114.1,626.6 110.1,629.1 107.9,630.5 119.0,623.4 113.5,626.9 120.0,622.7 117.2,624.5 110.2,629.0 128.5,617.6 114.7,626.2 115.6,625.6 119.5,623.1 112.4,627.6 112.9,627.3 117.7,624.2 111.1,628.5 114.1,626.6 105.2,632.3 103.3,633.5 121.0,622.1 105.0,632.4 114.3,626.5 105.1,632.4 110.7,628.7 113.5,626.9 122.1,621.4 117.0,624.7 123.6,620.5 103.3,633.5 116.4,625.1 114.0,626.6 115.1,625.9 113.6,626.9 112.3,627.7 123.1,620.8 107.1,631.1 119.0,623.4 106.4,631.6 110.1,629.1 117.4,624.5 113.3,627.1 121.2,622.0 112.6,627.5 116.5,625.0 112.6,627.5 119.5,623.0 114.8,626.1 111.7,628.1 116.7,624.9 106.7,631.3 120.6,622.3 107.1,631.1 115.1,625.9 117.1,624.6 112.7,627.5 110.4,628.9 103.9,633.1 109.0,629.8 114.5,626.3 114.4,626.4 108.0,630.5 114.6,626.3 121.8,621.6 116.9,624.8 108.0,630.5 126.6,618.5 104.2,632.9 117.1,624.6 116.4,625.1 121.1,622.1 106.6,631.4 114.0,626.6 121.8,621.6 115.4,625.7 121.2,622.0 104.4,632.8 108.0,630.5 108.5,630.2 115.3,625.8 119.3,623.2 118.0,624.1 109.4,629.6 115.9,625.4 107.8,630.6 121.7,621.7 120.7,622.3 118.3,623.9 113.6,626.9 121.9,621.5 113.0,627.3 119.1,623.3 114.8,626.1 114.4,626.4 110.5,628.9 117.6,624.3 117.5,624.3 118.7,623.6 110.9,628.6 114.1,626.6 109.0,629.8 117.2,624.6" fill="none" stroke="none" marker-start="url(#mm)" marker-mid="url(#mm)" marker-end="url(#mm)"/>
<text x="43.80" y="573.60" font-size="8.2" textLength="28.00" lengthAdjust="spacingAndGlyphs" font-weight="bold" fill="#0c141c" stroke="#0c141c" stroke-width="1.1">width (inches</text>
<rect x="43" y="557" width="1" height="72" fill="#0c141c" />
<rect x="71.8" y="557" width="1" height="72" fill="#0c141c" />
<rect x="100.9" y="557" width="1" height="72" fill="#0c141c" />
<rect x="129.8" y="557" width="1" height="72" fill="#0c141c" />
<rect x="43" y="556.5" width="87.5" height="1" fill="#0c141c" />
<rect x="43" y="576.1" width="87.5" height="1" fill="#0c141c" />
<rect x="43" y="595.7" width="87.5" height="1" fill="#0c141c" />
<rect x="43" y="615.3" width="87.5" height="1" fill="#0c141c" />
<text x="86.50" y="549.60" font-size="3.2" text-anchor="middle" fill="#303030" >centerLength</text>
<rect x="73.2" y="552.6" width="1.2" height="1.4" fill="#c8a040" />
<rect x="86.3" y="552.6" width="1.2" height="1.4" fill="#c8a040" />
<rect x="99.2" y="552.6" width="1.2" height="1.4" fill="#c8a040" />
<rect x="39.5" y="578.7" width="1.6" height="1.3" fill="#c87820" />
<rect x="39.5" y="586.9" width="1.6" height="1.3" fill="#c87820" />
<rect x="39.5" y="594.4" width="1.6" height="1.3" fill="#c87820" />
<rect x="36" y="618.8" width="2.5" height="1.5" fill="#101010" />
<rect x="38.7" y="618.8" width="1.6" height="1.5" fill="#c87820" />
<rect x="36" y="625.8" width="2.5" height="1.5" fill="#101010" />
<rect x="38.7" y="625.8" width="1.6" height="1.5" fill="#c87820" />
<text transform="translate(21.5 587) rotate(-90)" font-size="2.6" text-anchor="middle" fill="#8090a0">centerLength</text>
<text transform="translate(21.5 620) rotate(-90)" font-size="2.6" text-anchor="middle" fill="#8090a0">heat</text>
</g>
<rect x="130.8" y="546" width="4.2" height="83" fill="#dde6ef" />
<rect x="131" y="546.5" width="4" height="2.5" fill="#f0f4f8" />
<rect x="132.3" y="547.3" width="1.4" height="1.2" fill="#101010" />
<rect x="131.2" y="549.8" width="3.6" height="20.5" rx="0.8" fill="url(#g26)" stroke="#808088" stroke-width="0.5"/>
<rect x="131.6" y="559.6" width="2.8" height="1.4" fill="#505058" />
<rect x="131" y="625.5" width="4" height="3" fill="#f0f4f8" />
<rect x="132.3" y="626.3" width="1.4" height="1.2" fill="#101010" />
<rect x="19" y="629" width="112" height="4" fill="#dde6ef" />
<rect x="19.8" y="630.2" width="1.5" height="1.6" fill="#101010" />
<rect x="128.6" y="630.2" width="1.5" height="1.6" fill="#101010" />
<rect x="24.8" y="629.4" width="32.8" height="3.2" rx="0.8" fill="url(#g27)" stroke="#8088a0" stroke-width="0.4"/>
<rect x="40" y="629.8" width="1.6" height="2.4" fill="#404850" />
<rect x="131" y="629" width="4" height="4" fill="#3a78c8" />
<rect x="132" y="630" width="2.2" height="2.2" fill="#a8c8f0" />
</svg>
</body></html>
